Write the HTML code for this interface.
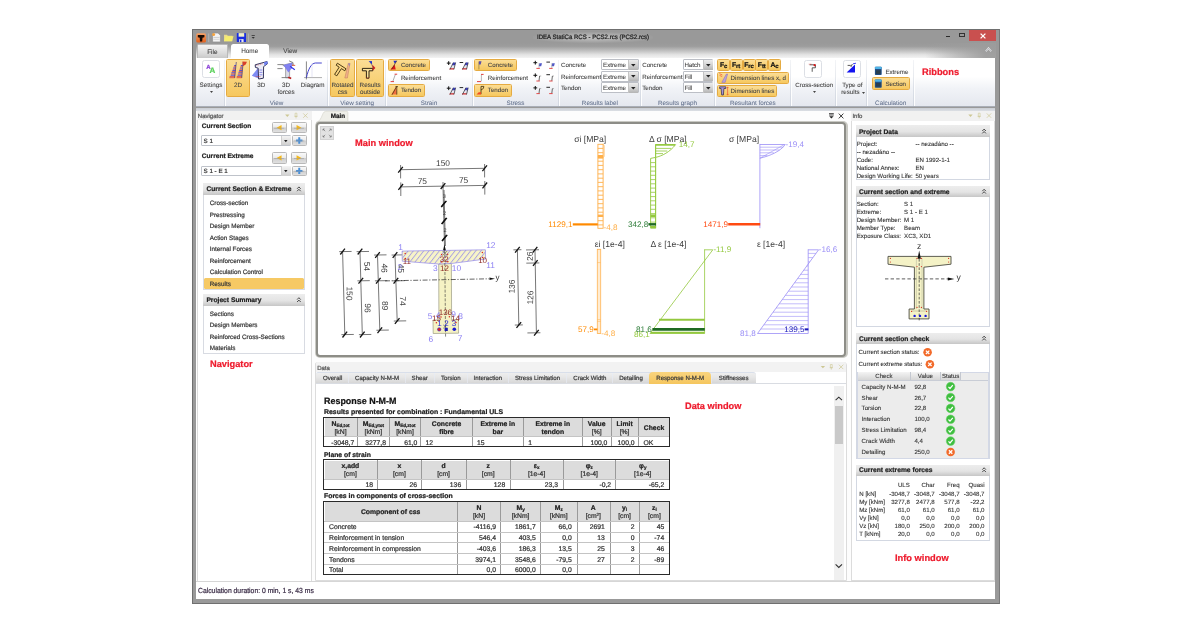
<!DOCTYPE html>
<html><head><meta charset="utf-8"><title>IDEA StatiCa RCS</title><style>
html,body{margin:0;padding:0;background:#fff;}
body{width:1200px;height:630px;position:relative;overflow:hidden;font-family:"Liberation Sans",Arial,sans-serif;color:#222;text-rendering:geometricPrecision;-webkit-text-stroke:0.22px;}
#r div{position:absolute;box-sizing:border-box;}
#r svg{position:absolute;overflow:visible;}
#r{position:absolute;left:0;top:0;width:1200px;height:630px;will-change:transform;}
.ob{background:linear-gradient(#fbdd95,#f6c85f);border:1px solid #e5ab42;border-radius:1.5px;}
.hd{background:linear-gradient(#ececec,#e2e2e2 55%,#c4c4c4);}
.gl{color:#5d6b86;}
</style></head><body><div id="r">
<div style="left:192.00px;top:29.00px;width:807.50px;height:574.50px;background:#999;border:1px solid #6f6f6f;border-right-color:#7a7a7a;"></div>
<div style="left:196.00px;top:43.00px;width:799.50px;height:15.00px;background:linear-gradient(#999 0%,#9d9d9d 22%,#bcbcbc 48%,#e3e3e3 78%,#f3f3f3 100%);"></div>
<div style="left:925.00px;top:43.00px;width:70.50px;height:14.50px;background:linear-gradient(90deg,rgba(156,156,156,0) 0%,rgba(156,156,156,.55) 45%,rgba(156,156,156,.95) 85%);"></div>
<div style="left:533.00px;top:31.50px;width:120.00px;height:11.00px;background:radial-gradient(ellipse at center,rgba(230,230,230,.55) 0%,rgba(200,200,200,.25) 55%,rgba(156,156,156,0) 75%);"></div>
<div id="f4" style="left:537.00px;top:32.00px;height:12.00px;line-height:12.00px;font-size:6.3px;white-space:nowrap;transform-origin:0 50%;transform:scaleX(0.9611);color:#1c1c1c;">IDEA StatiCa RCS - PCS2.rcs (PCS2.rcs)</div>
<div style="left:945.60px;top:36.20px;width:4.60px;height:1.30px;background:#2a2a2a;"></div>
<div style="left:959.30px;top:32.80px;width:5.60px;height:4.70px;border:0.8px solid #333;border-top-width:1.6px;"></div>
<div style="left:969.30px;top:29.60px;width:26.30px;height:11.20px;background:#c9504f;"></div>
<svg style="left:979.5px;top:32.5px" width="6" height="6" viewBox="0 0 6 6"><path d="M0.6 0.6L5.4 5.4M5.4 0.6L0.6 5.4" stroke="#fff" stroke-width="1.3" fill="none"/></svg>
<svg style="left:985.2px;top:47.3px" width="7" height="5" viewBox="0 0 7 5"><path d="M0.8 4.2L3.5 1.2L6.2 4.2" stroke="#f4f4f4" stroke-width="1.5" fill="none"/><path d="M0.8 4.2L3.5 1.2L6.2 4.2" stroke="#8a8f9a" stroke-width="0.6" fill="none"/></svg>
<svg style="left:196px;top:32.5px" width="56" height="10" viewBox="196 32.5 56 10">
<defs><linearGradient id="gA" x1="0" y1="0" x2="0" y2="1"><stop offset="0" stop-color="#f6a268"/><stop offset="1" stop-color="#e4601c"/></linearGradient></defs>
<rect x="196.2" y="32.8" width="9.8" height="9.3" rx="1.6" fill="url(#gA)"/>
<path d="M197.8 34.6h6.6v2.1l-1.9 0.6-0.3 3.8h-2.2l-0.3-3.8-1.9-0.6z" fill="#1a0d06"/>
<rect x="208.2" y="33" width="1" height="8.6" fill="#b4b4b4"/>
<path d="M212.6 32.6h5.4l2.4 2.2v6.6h-7.8z" fill="#f4f4f4" stroke="#8a8a8a" stroke-width="0.6"/>
<rect x="213.4" y="36.4" width="6.2" height="1" fill="#cfcfcf"/><rect x="213.4" y="38.3" width="6.2" height="1" fill="#d8d8d8"/>
<circle cx="213.6" cy="34" r="1.5" fill="#f6a23a"/>
<path d="M224 34.2h3l0.8 1h4.6v5.6h-8.4z" fill="#e9dc8a"/>
<path d="M224 40.8l1.6-5h8l-1.8 5z" fill="#f6ee6e"/>
<rect x="236.8" y="32.6" width="9.2" height="9" rx="0.6" fill="#1a2ee0"/>
<rect x="238.6" y="32.6" width="5.6" height="3.6" fill="#f2f0c6"/><rect x="239.2" y="38.6" width="4.4" height="3" fill="#e6e6ee"/><rect x="240" y="39.2" width="1.4" height="2.4" fill="#1a2ee0"/>
<rect x="248" y="33" width="1" height="8.6" fill="#b0b0b0"/><rect x="251.6" y="34.6" width="3.2" height="0.8" fill="#333"/><path d="M251.6 36.4h3.2l-1.6 1.8z" fill="#333"/>
</svg>
<div style="left:196.80px;top:44.40px;width:31.60px;height:13.20px;background:linear-gradient(#f3f3f3,#dcdcdc 60%,#c9c9c9);border:1px solid #b9b9b9;border-bottom:none;border-radius:1.5px 1.5px 0 0;"></div>
<div style="left:112.30px;width:200px;text-align:center;top:47.00px;height:12.00px;line-height:12.00px;font-size:6.4px;white-space:nowrap;color:#333;-webkit-text-stroke:0.06px;">File</div>
<div style="left:230.60px;top:44.00px;width:38.40px;height:14.00px;background:#fff;border-radius:2.5px 2.5px 0 0;"></div>
<div style="left:149.70px;width:200px;text-align:center;top:46.00px;height:12.00px;line-height:12.00px;font-size:6.4px;white-space:nowrap;color:#3c3c3c;-webkit-text-stroke:0.06px;">Home</div>
<div style="left:190.20px;width:200px;text-align:center;top:46.00px;height:12.00px;line-height:12.00px;font-size:6.4px;white-space:nowrap;color:#3c3c3c;-webkit-text-stroke:0.06px;">View</div>
<div style="left:196.00px;top:57.50px;width:799.30px;height:49.20px;background:linear-gradient(#ffffff 0%,#ffffff 38%,#f1f3f7 62%,#e4e7ee 100%);"></div>
<div style="left:196.00px;top:106.20px;width:799.30px;height:1.30px;background:#a9aeb7;"></div>
<div style="left:196.00px;top:107.50px;width:799.30px;height:3.30px;background:linear-gradient(#c9cdd4,#dcdfe4);"></div>
<div style="left:196.00px;top:110.80px;width:799.30px;height:471.00px;background:#fdfdfd;"></div>
<div style="left:223.90px;top:59.50px;width:1.00px;height:46.00px;background:linear-gradient(rgba(214,219,228,.3),#d3d8e1);"></div>
<div style="left:224.90px;top:59.50px;width:1.00px;height:46.00px;background:rgba(255,255,255,.9);"></div>
<div style="left:327.20px;top:59.50px;width:1.00px;height:46.00px;background:linear-gradient(rgba(214,219,228,.3),#d3d8e1);"></div>
<div style="left:328.20px;top:59.50px;width:1.00px;height:46.00px;background:rgba(255,255,255,.9);"></div>
<div style="left:385.00px;top:59.50px;width:1.00px;height:46.00px;background:linear-gradient(rgba(214,219,228,.3),#d3d8e1);"></div>
<div style="left:386.00px;top:59.50px;width:1.00px;height:46.00px;background:rgba(255,255,255,.9);"></div>
<div style="left:471.80px;top:59.50px;width:1.00px;height:46.00px;background:linear-gradient(rgba(214,219,228,.3),#d3d8e1);"></div>
<div style="left:472.80px;top:59.50px;width:1.00px;height:46.00px;background:rgba(255,255,255,.9);"></div>
<div style="left:557.70px;top:59.50px;width:1.00px;height:46.00px;background:linear-gradient(rgba(214,219,228,.3),#d3d8e1);"></div>
<div style="left:558.70px;top:59.50px;width:1.00px;height:46.00px;background:rgba(255,255,255,.9);"></div>
<div style="left:639.60px;top:59.50px;width:1.00px;height:46.00px;background:linear-gradient(rgba(214,219,228,.3),#d3d8e1);"></div>
<div style="left:640.60px;top:59.50px;width:1.00px;height:46.00px;background:rgba(255,255,255,.9);"></div>
<div style="left:714.20px;top:59.50px;width:1.00px;height:46.00px;background:linear-gradient(rgba(214,219,228,.3),#d3d8e1);"></div>
<div style="left:715.20px;top:59.50px;width:1.00px;height:46.00px;background:rgba(255,255,255,.9);"></div>
<div style="left:790.10px;top:59.50px;width:1.00px;height:46.00px;background:linear-gradient(rgba(214,219,228,.3),#d3d8e1);"></div>
<div style="left:791.10px;top:59.50px;width:1.00px;height:46.00px;background:rgba(255,255,255,.9);"></div>
<div style="left:835.10px;top:59.50px;width:1.00px;height:46.00px;background:linear-gradient(rgba(214,219,228,.3),#d3d8e1);"></div>
<div style="left:836.10px;top:59.50px;width:1.00px;height:46.00px;background:rgba(255,255,255,.9);"></div>
<div style="left:866.20px;top:59.50px;width:1.00px;height:46.00px;background:linear-gradient(rgba(214,219,228,.3),#d3d8e1);"></div>
<div style="left:867.20px;top:59.50px;width:1.00px;height:46.00px;background:rgba(255,255,255,.9);"></div>
<div style="left:912.70px;top:59.50px;width:1.00px;height:46.00px;background:linear-gradient(rgba(214,219,228,.3),#d3d8e1);"></div>
<div style="left:913.70px;top:59.50px;width:1.00px;height:46.00px;background:rgba(255,255,255,.9);"></div>
<div style="left:176.50px;width:200px;text-align:center;top:98.00px;height:12.00px;line-height:12.00px;font-size:6.3px;white-space:nowrap;color:#62708c;-webkit-text-stroke:0.05px;">View</div>
<div style="left:257.20px;width:200px;text-align:center;top:98.00px;height:12.00px;line-height:12.00px;font-size:6.3px;white-space:nowrap;color:#62708c;-webkit-text-stroke:0.05px;">View setting</div>
<div style="left:329.00px;width:200px;text-align:center;top:98.00px;height:12.00px;line-height:12.00px;font-size:6.3px;white-space:nowrap;color:#62708c;-webkit-text-stroke:0.05px;">Strain</div>
<div style="left:415.40px;width:200px;text-align:center;top:98.00px;height:12.00px;line-height:12.00px;font-size:6.3px;white-space:nowrap;color:#62708c;-webkit-text-stroke:0.05px;">Stress</div>
<div style="left:499.90px;width:200px;text-align:center;top:98.00px;height:12.00px;line-height:12.00px;font-size:6.3px;white-space:nowrap;color:#62708c;-webkit-text-stroke:0.05px;">Results label</div>
<div style="left:577.50px;width:200px;text-align:center;top:98.00px;height:12.00px;line-height:12.00px;font-size:6.3px;white-space:nowrap;color:#62708c;-webkit-text-stroke:0.05px;">Results graph</div>
<div style="left:652.80px;width:200px;text-align:center;top:98.00px;height:12.00px;line-height:12.00px;font-size:6.3px;white-space:nowrap;color:#62708c;-webkit-text-stroke:0.05px;">Resultant forces</div>
<div style="left:790.70px;width:200px;text-align:center;top:98.00px;height:12.00px;line-height:12.00px;font-size:6.3px;white-space:nowrap;color:#62708c;-webkit-text-stroke:0.05px;">Calculation</div>
<div style="left:201.50px;top:60.00px;width:18.60px;height:18.00px;background:#fff;border:1px solid #dcdfe5;border-radius:2.5px;"></div>
<div style="left:206.20px;top:62.00px;height:12.00px;line-height:12.00px;font-size:6px;white-space:nowrap;color:#8a3fd8;font-weight:bold;">A</div>
<div style="left:209.60px;top:63.00px;height:16.00px;line-height:16.00px;font-size:8px;white-space:nowrap;color:#58d058;font-weight:bold;">A</div>
<div style="left:111.00px;width:200px;text-align:center;top:80.00px;height:12.00px;line-height:12.00px;font-size:6.3px;white-space:nowrap;color:#444;-webkit-text-stroke:0.08px;">Settings</div>
<svg style="left:209.5px;top:91.4px" width="3" height="2" viewBox="0 0 3 2"><path d="M0 0h3l-1.5 2z" fill="#444"/></svg>
<div class="ob" style="left:226.30px;top:59.00px;width:23.50px;height:38.00px;"></div>
<div style="left:138.00px;width:200px;text-align:center;top:80.00px;height:12.00px;line-height:12.00px;font-size:6.3px;white-space:nowrap;color:#444;-webkit-text-stroke:0.08px;">2D</div>
<div style="left:161.40px;width:200px;text-align:center;top:80.00px;height:12.00px;line-height:12.00px;font-size:6.3px;white-space:nowrap;color:#444;-webkit-text-stroke:0.08px;">3D</div>
<div style="left:186.00px;width:200px;text-align:center;top:80.00px;height:12.00px;line-height:12.00px;font-size:6.3px;white-space:nowrap;color:#444;-webkit-text-stroke:0.08px;">3D</div>
<div style="left:186.00px;width:200px;text-align:center;top:87.00px;height:12.00px;line-height:12.00px;font-size:6.3px;white-space:nowrap;color:#444;-webkit-text-stroke:0.08px;">forces</div>
<div style="left:212.60px;width:200px;text-align:center;top:80.00px;height:12.00px;line-height:12.00px;font-size:6.3px;white-space:nowrap;color:#444;-webkit-text-stroke:0.08px;">Diagram</div>
<div class="ob" style="left:329.90px;top:59.00px;width:25.60px;height:38.00px;"></div>
<div class="ob" style="left:356.10px;top:59.00px;width:27.90px;height:38.00px;"></div>
<div style="left:242.60px;width:200px;text-align:center;top:80.00px;height:12.00px;line-height:12.00px;font-size:6.3px;white-space:nowrap;color:#444;-webkit-text-stroke:0.08px;">Rotated</div>
<div style="left:242.60px;width:200px;text-align:center;top:87.00px;height:12.00px;line-height:12.00px;font-size:6.3px;white-space:nowrap;color:#444;-webkit-text-stroke:0.08px;">css</div>
<div style="left:270.10px;width:200px;text-align:center;top:80.00px;height:12.00px;line-height:12.00px;font-size:6.3px;white-space:nowrap;color:#444;-webkit-text-stroke:0.08px;">Results</div>
<div style="left:270.10px;width:200px;text-align:center;top:87.00px;height:12.00px;line-height:12.00px;font-size:6.3px;white-space:nowrap;color:#444;-webkit-text-stroke:0.08px;">outside</div>
<svg style="left:0;top:0" width="1200" height="630" viewBox="0 0 1200 630">
<!-- 2D icon -->
<g>
<path d="M235.6 62h0.9L234.7 78h-5.5z" fill="#f2dcae"/>
<path d="M242.2 62h1.2L241.8 78h-5.2z" fill="#f2dcae"/>
<g stroke="#3434d4" stroke-width="0.9"><path d="M234.2 65.6h1.8M233.2 68h2.6M232.4 70.4h3.2M231.4 72.8h3.9M230.6 75.2h4.5"/><path d="M240.8 65.6h2M240 68h2.6M239.2 70.4h3.2M238.4 72.8h3.8M237.6 75.2h4.4"/></g>
<g stroke="#d83a28" stroke-width="0.8"><path d="M233.7 66.8h2.2M232.8 69.2h2.9M231.9 71.6h3.5M231 74h4.2M229.6 76.6h5.3M229.3 77.7h5.4"/><path d="M240.4 66.8h2.3M239.6 69.2h2.9M238.8 71.6h3.5M238 74h4.1M236.8 76.6h5.2M236.6 77.7h5.2"/></g>
<path d="M236.3 62L234.6 78M243.2 62L241.7 78" stroke="#4a3a6a" stroke-width="0.7"/>
<path d="M242.4 61.6l4.5 0.2-1.2 2.8-2.8 1.6z" fill="#d8402a"/>
</g>
<!-- 3D icon -->
<g>
<path d="M251.8 75.8l6.4-8 0.4 10.8z" fill="#6878f2" opacity=".85"/>
<path d="M255.2 64.8l11.6-3.2 0.6 2.2-3.8 2.8-0.2 11.6-4.8 0.8-0.4-10.8-2.8-0.8z" fill="#ececf6" stroke="#24244e" stroke-width="0.9"/>
<path d="M263.8 62.6l4-1.4-0.2 2.6-3 1.6z" fill="#6f7ff0"/>
<path d="M256.4 65.4l6.4-1.6" stroke="#d04040" stroke-width="0.5" stroke-dasharray="1 0.8"/>
<path d="M259.4 70h3M259.4 72.4h3M259.4 74.8h3" stroke="#4a4ae0" stroke-width="0.6"/>
<path d="M255.6 76.6h5" stroke="#d04040" stroke-width="0.5"/>
</g>
<!-- 3D forces icon -->
<g>
<path d="M277.4 64.6h6.2M277.4 68.6h5.2M289 60.8l4 1.8v3" stroke="#555" stroke-width="0.7" fill="none"/>
<path d="M282.8 65.2l9.6-2.4 0.6 2.4-3.4 1.6v11h-4V67z" fill="#dcdce6" stroke="#777" stroke-width="0.6"/>
<path d="M283.4 65l8.8-2.2 -0.4 5.4-3.4 4.2z" fill="#7878f2" opacity=".9"/>
<path d="M290.2 66.4l4.6 3.4" stroke="#2828e8" stroke-width="1.1"/>
<path d="M292 65.2l3.2 0.2" stroke="#e04a28" stroke-width="0.9"/>
<path d="M281.6 77.6h9" stroke="#777" stroke-width="0.9"/>
<path d="M288.2 77.2l3 1.2" stroke="#c02020" stroke-width="1.6"/>
</g>
<!-- Diagram icon -->
<g fill="none">
<path d="M304 77.6h18" stroke="#9a9a9a" stroke-width="0.8"/><path d="M306.4 61.4v18" stroke="#555" stroke-width="0.7"/>
<path d="M306.4 77.6c2-9 5-14.4 9-14.6h6.4" stroke="#3030c8" stroke-width="0.9"/>
<path d="M312 63.4v14" stroke="#c8c8e8" stroke-width="0.5"/>
</g>
<!-- Rotated css icon -->
<g fill="none">
<path d="M337.4 63.2l8.6 5.6-1.2 2-3.4-2.2-4.6 7.2-2.2-1.4 4.6-7.2-3-2z" stroke="#3a2a08" stroke-width="0.9" fill="#f9d684"/>
<path d="M348.2 63.4l-3.4 14.6h2.6l2.6-14.6z" fill="#f0b088" stroke="#b06a50" stroke-width="0.4"/>
<path d="M347.8 63.4l2.4 0-0.6 3.2z" fill="#9a8ab8"/>
</g>
<!-- Results outside icon -->
<g>
<path d="M362.4 68.4h10.4v2.4h-3.8v7.4h-2.6v-7.4h-4z" fill="#fbe19a" stroke="#1a1206" stroke-width="0.9"/>
<path d="M368.6 61.2l3.2-0.2 0.4 3.6z" fill="#1a30d8"/>
<path d="M372.2 64.6l3.2 3.4-2.6 2.4z" fill="#e01818"/>
<path d="M370.4 62.6l3.6 6.4" stroke="#555" stroke-width="0.5"/>
<path d="M366.8 77.4v1M368.4 77.4v1" stroke="#d03020" stroke-width="0.6"/>
</g>
</svg>
<div class="ob" style="left:387.70px;top:59.30px;width:42.70px;height:12.20px;"></div>
<div class="ob" style="left:387.70px;top:84.30px;width:37.20px;height:12.30px;"></div>
<div style="left:400.90px;top:60.00px;height:12.00px;line-height:12.00px;font-size:6.2px;white-space:nowrap;color:#444;-webkit-text-stroke:0.08px;">Concrete</div>
<div style="left:400.90px;top:73.00px;height:12.00px;line-height:12.00px;font-size:6.2px;white-space:nowrap;color:#444;-webkit-text-stroke:0.08px;">Reinforcement</div>
<div style="left:400.90px;top:85.00px;height:12.00px;line-height:12.00px;font-size:6.2px;white-space:nowrap;color:#444;-webkit-text-stroke:0.08px;">Tendon</div>
<div class="ob" style="left:474.10px;top:59.30px;width:43.00px;height:12.20px;"></div>
<div class="ob" style="left:474.10px;top:84.30px;width:37.60px;height:12.30px;"></div>
<div style="left:487.80px;top:60.00px;height:12.00px;line-height:12.00px;font-size:6.2px;white-space:nowrap;color:#444;-webkit-text-stroke:0.08px;">Concrete</div>
<div style="left:487.80px;top:73.00px;height:12.00px;line-height:12.00px;font-size:6.2px;white-space:nowrap;color:#444;-webkit-text-stroke:0.08px;">Reinforcement</div>
<div style="left:487.80px;top:85.00px;height:12.00px;line-height:12.00px;font-size:6.2px;white-space:nowrap;color:#444;-webkit-text-stroke:0.08px;">Tendon</div>
<div style="left:561.00px;top:60.00px;height:12.00px;line-height:12.00px;font-size:6.2px;white-space:nowrap;color:#444;-webkit-text-stroke:0.08px;">Concrete</div>
<div style="left:601.40px;top:59.30px;width:37.20px;height:10.90px;background:#fff;border:1px solid #bcbfc6;border-radius:1px;"></div>
<div style="left:628.20px;top:60.00px;width:9.70px;height:9.50px;background:linear-gradient(#ececec,#d6d6d6 45%,#b4b4b4);border-left:1px solid #c4c4c4;"></div>
<svg style="left:630.90px;top:63.55px" width="4.6" height="2.6" viewBox="0 0 4.6 2.6"><path d="M0 0h4.6l-2.3 2.6z" fill="#222"/></svg>
<div style="left:603.00px;top:60.00px;height:12.00px;line-height:12.00px;font-size:6.2px;white-space:nowrap;color:#444;-webkit-text-stroke:0.08px;">Extreme</div>
<div style="left:642.20px;top:60.00px;height:12.00px;line-height:12.00px;font-size:6.2px;white-space:nowrap;color:#444;-webkit-text-stroke:0.08px;">Concrete</div>
<div style="left:683.00px;top:59.30px;width:30.20px;height:10.90px;background:#fff;border:1px solid #bcbfc6;border-radius:1px;"></div>
<div style="left:703.00px;top:60.00px;width:9.50px;height:9.50px;background:linear-gradient(#ececec,#d6d6d6 45%,#b4b4b4);border-left:1px solid #c4c4c4;"></div>
<svg style="left:705.60px;top:63.55px" width="4.6" height="2.6" viewBox="0 0 4.6 2.6"><path d="M0 0h4.6l-2.3 2.6z" fill="#222"/></svg>
<div style="left:684.40px;top:60.00px;height:12.00px;line-height:12.00px;font-size:6.2px;white-space:nowrap;color:#444;-webkit-text-stroke:0.08px;">Hatch</div>
<div style="left:561.00px;top:72.00px;height:12.00px;line-height:12.00px;font-size:6.2px;white-space:nowrap;color:#444;-webkit-text-stroke:0.08px;">Reinforcement</div>
<div style="left:601.40px;top:71.00px;width:37.20px;height:10.60px;background:#fff;border:1px solid #bcbfc6;border-radius:1px;"></div>
<div style="left:628.20px;top:71.70px;width:9.70px;height:9.20px;background:linear-gradient(#ececec,#d6d6d6 45%,#b4b4b4);border-left:1px solid #c4c4c4;"></div>
<svg style="left:630.90px;top:75.10px" width="4.6" height="2.6" viewBox="0 0 4.6 2.6"><path d="M0 0h4.6l-2.3 2.6z" fill="#222"/></svg>
<div style="left:603.00px;top:72.00px;height:12.00px;line-height:12.00px;font-size:6.2px;white-space:nowrap;color:#444;-webkit-text-stroke:0.08px;">Extreme</div>
<div style="left:642.20px;top:72.00px;height:12.00px;line-height:12.00px;font-size:6.2px;white-space:nowrap;color:#444;-webkit-text-stroke:0.08px;">Reinforcement</div>
<div style="left:683.00px;top:71.00px;width:30.20px;height:10.60px;background:#fff;border:1px solid #bcbfc6;border-radius:1px;"></div>
<div style="left:703.00px;top:71.70px;width:9.50px;height:9.20px;background:linear-gradient(#ececec,#d6d6d6 45%,#b4b4b4);border-left:1px solid #c4c4c4;"></div>
<svg style="left:705.60px;top:75.10px" width="4.6" height="2.6" viewBox="0 0 4.6 2.6"><path d="M0 0h4.6l-2.3 2.6z" fill="#222"/></svg>
<div style="left:684.40px;top:72.00px;height:12.00px;line-height:12.00px;font-size:6.2px;white-space:nowrap;color:#444;-webkit-text-stroke:0.08px;">Fill</div>
<div style="left:561.00px;top:83.00px;height:12.00px;line-height:12.00px;font-size:6.2px;white-space:nowrap;color:#444;-webkit-text-stroke:0.08px;">Tendon</div>
<div style="left:601.40px;top:82.40px;width:37.20px;height:10.90px;background:#fff;border:1px solid #bcbfc6;border-radius:1px;"></div>
<div style="left:628.20px;top:83.10px;width:9.70px;height:9.50px;background:linear-gradient(#ececec,#d6d6d6 45%,#b4b4b4);border-left:1px solid #c4c4c4;"></div>
<svg style="left:630.90px;top:86.65px" width="4.6" height="2.6" viewBox="0 0 4.6 2.6"><path d="M0 0h4.6l-2.3 2.6z" fill="#222"/></svg>
<div style="left:603.00px;top:83.00px;height:12.00px;line-height:12.00px;font-size:6.2px;white-space:nowrap;color:#444;-webkit-text-stroke:0.08px;">Extreme</div>
<div style="left:642.20px;top:83.00px;height:12.00px;line-height:12.00px;font-size:6.2px;white-space:nowrap;color:#444;-webkit-text-stroke:0.08px;">Tendon</div>
<div style="left:683.00px;top:82.40px;width:30.20px;height:10.90px;background:#fff;border:1px solid #bcbfc6;border-radius:1px;"></div>
<div style="left:703.00px;top:83.10px;width:9.50px;height:9.50px;background:linear-gradient(#ececec,#d6d6d6 45%,#b4b4b4);border-left:1px solid #c4c4c4;"></div>
<svg style="left:705.60px;top:86.65px" width="4.6" height="2.6" viewBox="0 0 4.6 2.6"><path d="M0 0h4.6l-2.3 2.6z" fill="#222"/></svg>
<div style="left:684.40px;top:83.00px;height:12.00px;line-height:12.00px;font-size:6.2px;white-space:nowrap;color:#444;-webkit-text-stroke:0.08px;">Fill</div>
<div class="ob" style="left:717.40px;top:59.30px;width:12.50px;height:11.60px;"></div>
<div style="left:623.50px;width:200px;text-align:center;top:60.00px;height:12.00px;line-height:12.00px;font-size:6.8px;white-space:nowrap;color:#111;font-weight:bold;letter-spacing:-0.15px;"><span style="font-size:6.8px">F</span><span style="font-size:5.9px;position:relative;top:1.1px">c</span></div>
<div class="ob" style="left:729.60px;top:59.30px;width:13.20px;height:11.60px;"></div>
<div style="left:636.05px;width:200px;text-align:center;top:60.00px;height:12.00px;line-height:12.00px;font-size:6.8px;white-space:nowrap;color:#111;font-weight:bold;letter-spacing:-0.15px;"><span style="font-size:6.8px">F</span><span style="font-size:5.9px;position:relative;top:1.1px">rt</span></div>
<div class="ob" style="left:742.50px;top:59.30px;width:13.20px;height:11.60px;"></div>
<div style="left:648.95px;width:200px;text-align:center;top:60.00px;height:12.00px;line-height:12.00px;font-size:6.8px;white-space:nowrap;color:#111;font-weight:bold;letter-spacing:-0.15px;"><span style="font-size:6.8px">F</span><span style="font-size:5.9px;position:relative;top:1.1px">rc</span></div>
<div class="ob" style="left:755.40px;top:59.30px;width:12.90px;height:11.60px;"></div>
<div style="left:661.70px;width:200px;text-align:center;top:60.00px;height:12.00px;line-height:12.00px;font-size:6.8px;white-space:nowrap;color:#111;font-weight:bold;letter-spacing:-0.15px;"><span style="font-size:6.8px">F</span><span style="font-size:5.9px;position:relative;top:1.1px">tt</span></div>
<div class="ob" style="left:768.00px;top:59.30px;width:13.00px;height:11.60px;"></div>
<div style="left:674.35px;width:200px;text-align:center;top:60.00px;height:12.00px;line-height:12.00px;font-size:6.8px;white-space:nowrap;color:#111;font-weight:bold;letter-spacing:-0.15px;"><span style="font-size:6.8px">A</span><span style="font-size:5.9px;position:relative;top:1.1px">c</span></div>
<div class="ob" style="left:717.40px;top:71.70px;width:72.00px;height:12.00px;"></div>
<div class="ob" style="left:717.40px;top:84.80px;width:59.60px;height:12.00px;"></div>
<div style="left:730.60px;top:73.00px;height:12.00px;line-height:12.00px;font-size:6.2px;white-space:nowrap;color:#444;-webkit-text-stroke:0.08px;">Dimension lines x, d</div>
<div style="left:730.60px;top:86.00px;height:12.00px;line-height:12.00px;font-size:6.2px;white-space:nowrap;color:#444;-webkit-text-stroke:0.08px;">Dimension lines</div>
<div style="left:804.40px;top:60.30px;width:17.80px;height:17.60px;background:#fff;border:1px solid #dcdfe5;border-radius:2.5px;"></div>
<div style="left:714.20px;width:200px;text-align:center;top:80.00px;height:12.00px;line-height:12.00px;font-size:6.2px;white-space:nowrap;color:#444;-webkit-text-stroke:0.08px;">Cross-section</div>
<svg style="left:813px;top:91.4px" width="3" height="2" viewBox="0 0 3 2"><path d="M0 0h3l-1.5 2z" fill="#444"/></svg>
<div style="left:842.60px;top:60.30px;width:18.10px;height:17.60px;background:#fff;border:1px solid #dcdfe5;border-radius:2.5px;"></div>
<div style="left:752.30px;width:200px;text-align:center;top:80.00px;height:12.00px;line-height:12.00px;font-size:6.2px;white-space:nowrap;color:#444;-webkit-text-stroke:0.08px;">Type of</div>
<div style="left:750.40px;width:200px;text-align:center;top:87.00px;height:12.00px;line-height:12.00px;font-size:6.2px;white-space:nowrap;color:#444;-webkit-text-stroke:0.08px;">results</div>
<svg style="left:862.2px;top:91.6px" width="3" height="2" viewBox="0 0 3 2"><path d="M0 0h3l-1.5 2z" fill="#444"/></svg>
<div class="ob" style="left:871.90px;top:77.40px;width:38.20px;height:12.60px;"></div>
<div style="left:885.40px;top:67.00px;height:12.00px;line-height:12.00px;font-size:6.2px;white-space:nowrap;color:#444;-webkit-text-stroke:0.08px;">Extreme</div>
<div style="left:885.40px;top:79.00px;height:12.00px;line-height:12.00px;font-size:6.2px;white-space:nowrap;color:#444;-webkit-text-stroke:0.08px;">Section</div>
<div id="f132" style="left:922.10px;top:64.00px;height:16.00px;line-height:16.00px;font-size:9.4px;white-space:nowrap;transform-origin:0 50%;transform:scaleX(0.9893);color:#ee1c2e;font-weight:bold;">Ribbons</div>
<svg style="left:0;top:0" width="1200" height="630" viewBox="0 0 1200 630"><g transform="translate(446.8,61.2)"><path d="M0 1.9h3.8M1.9 0v3.8" stroke="#111" stroke-width="1"/><path d="M6.4 1.4h2.4L7.2 8.2H3z" fill="#e8e8f0"/><path d="M6.5 1.4h2.3l-0.7 2.6H5.3z" fill="#3a3ec0"/><path d="M3 7h4.4l-0.3 1.2H2.6z" fill="#d23030"/><path d="M6.5 1.4L3.1 8.2M8.8 1.4L7.1 8.2" stroke="#26262e" stroke-width="0.7"/></g><g transform="translate(459.4,61.2)"><path d="M0.2 1.3h3.6" stroke="#111" stroke-width="0.9"/><path d="M6.4 1.4h2.4L7.2 8.2H3z" fill="#e8e8f0"/><path d="M6.5 1.4h2.3l-0.7 2.6H5.3z" fill="#3a3ec0"/><path d="M3 7h4.4l-0.3 1.2H2.6z" fill="#d23030"/><path d="M6.5 1.4L3.1 8.2M8.8 1.4L7.1 8.2" stroke="#26262e" stroke-width="0.7"/></g><g transform="translate(446.8,86.3)"><path d="M0 1.9h3.8M1.9 0v3.8" stroke="#111" stroke-width="1"/><path d="M6.4 1.4h2.4L7.2 8.2H3z" fill="#e8e8f0"/><path d="M6.5 1.4h2.3l-0.7 2.6H5.3z" fill="#3a3ec0"/><path d="M3 7h4.4l-0.3 1.2H2.6z" fill="#d23030"/><path d="M6.5 1.4L3.1 8.2M8.8 1.4L7.1 8.2" stroke="#26262e" stroke-width="0.7"/></g><g transform="translate(459.4,86.3)"><path d="M0.2 1.3h3.6" stroke="#111" stroke-width="0.9"/><path d="M6.4 1.4h2.4L7.2 8.2H3z" fill="#e8e8f0"/><path d="M6.5 1.4h2.3l-0.7 2.6H5.3z" fill="#3a3ec0"/><path d="M3 7h4.4l-0.3 1.2H2.6z" fill="#d23030"/><path d="M6.5 1.4L3.1 8.2M8.8 1.4L7.1 8.2" stroke="#26262e" stroke-width="0.7"/></g><g transform="translate(533.4,60.8)"><path d="M0 1.9h3.8M1.9 0v3.8" stroke="#111" stroke-width="1"/><path d="M6 2.4h2.6l-0.8 3H5.4z" fill="#5058c8"/><path d="M5.6 2.4v5.2" stroke="#888" stroke-width="0.5"/><path d="M3 7.6h3.4" stroke="#e02020" stroke-width="0.8"/></g><g transform="translate(546.2,60.8)"><path d="M0.2 1.3h3.6" stroke="#111" stroke-width="0.9"/><path d="M6 2.4h2.6l-0.8 3H5.4z" fill="#5058c8"/><path d="M5.6 2.4v5.2" stroke="#888" stroke-width="0.5"/><path d="M3 7.6h3.4" stroke="#e02020" stroke-width="0.8"/></g><g transform="translate(533.4,73.4)"><path d="M0 1.9h3.8M1.9 0v3.8" stroke="#111" stroke-width="1"/><path d="M6 2.6h1.8" stroke="#888" stroke-width="0.6"/><path d="M6.2 2.6L5.6 7.4" stroke="#444" stroke-width="0.8"/><path d="M3 7.6h3.4" stroke="#e02020" stroke-width="0.8"/></g><g transform="translate(546.2,73.4)"><path d="M0.2 1.3h3.6" stroke="#111" stroke-width="0.9"/><path d="M6 2.6h1.8" stroke="#888" stroke-width="0.6"/><path d="M6.2 2.6L5.6 7.4" stroke="#444" stroke-width="0.8"/><path d="M3 7.6h3.4" stroke="#e02020" stroke-width="0.8"/></g><g transform="translate(533.4,86.0)"><path d="M0 1.9h3.8M1.9 0v3.8" stroke="#111" stroke-width="1"/><path d="M6 2.6h1.8" stroke="#888" stroke-width="0.6"/><path d="M6.2 2.6L5.6 7.4" stroke="#444" stroke-width="0.8"/><path d="M3 7.6h3.4" stroke="#e02020" stroke-width="0.8"/></g><g transform="translate(546.2,86.0)"><path d="M0.2 1.3h3.6" stroke="#111" stroke-width="0.9"/><path d="M6 2.6h1.8" stroke="#888" stroke-width="0.6"/><path d="M6.2 2.6L5.6 7.4" stroke="#444" stroke-width="0.8"/><path d="M3 7.6h3.4" stroke="#e02020" stroke-width="0.8"/></g><g><path d="M393.4 60.8h3.6l-2.2 3z" fill="#2030d0"/><path d="M394.7 64.4l-4.3 5h5.3z" fill="#e01818"/><path d="M396.8 60.8l-5.2 8.6" stroke="#3a2a18" stroke-width="0.6"/></g>
<g><path d="M395.4 74.4l-2.6 7" stroke="#999" stroke-width="0.8"/><path d="M394.6 74.2h2.6" stroke="#e04040" stroke-width="1"/><path d="M390.6 81.6h3.4" stroke="#e04040" stroke-width="1"/></g>
<g><path d="M396.4 86.6l-5 8h5.4z" fill="#f07040"/><path d="M396.6 86.4l-4.6 8.4M396.8 86.6v8M395.4 86.6h2.6" stroke="#3a2a08" stroke-width="0.7" fill="none"/></g>
<g><path d="M478.9 61.6v7.8" stroke="#8a7a40" stroke-width="0.7"/><path d="M478.9 61.2h2.6l-0.8 3.2h-1.8z" fill="#5c50a8"/></g>
<g><path d="M481.4 74.6v6.8" stroke="#999" stroke-width="0.7"/><path d="M481 74.4h2.6" stroke="#e04040" stroke-width="1"/><path d="M477 81.6h4" stroke="#e04040" stroke-width="1"/></g>
<g><path d="M481 94.2V86.4h2.8l-0.4 2-2.4 1.6" stroke="#3a2a08" stroke-width="0.8" fill="none"/><path d="M476.6 94.6h4.4v-2.6l-2.6 0.4z" fill="#f04a22"/></g>
<g><path d="M726.4 74l-4.6 8.4h3.4l2.4-8.4z" fill="#b8a0d8" stroke="#8a6ab8" stroke-width="0.5"/><path d="M719.4 73.6l3 1.4M719.6 75.4l2.6 1.2" stroke="#f05028" stroke-width="0.7"/></g>
<g><path d="M719.6 86.8h6.2v1.7h-1.9l-0.5 6.5h-1.7l-0.6-6.5h-1.5z" fill="#a794d8" stroke="#2c2648" stroke-width="0.7"/><path d="M727.6 87v8" stroke="#f04028" stroke-width="0.6"/><path d="M726.8 88l0.8-1.2 0.8 1.2M726.8 94l0.8 1.2 0.8-1.2" stroke="#f04028" stroke-width="0.5" fill="none"/></g>
<g><path d="M809.6 64.8h5.8v3h-3.2v4" stroke="#333" stroke-width="0.8" fill="none"/><path d="M808.8 64.2h3" stroke="#e02020" stroke-width="0.6" stroke-dasharray="0.8 0.5"/><circle cx="814.6" cy="65.2" r="1.1" fill="#e01818"/></g>
<g><path d="M855 64.6v7.8h-8.4z" fill="#1414f0"/><path d="M847.6 65.4h3.2M852.4 64l-1.6 3" stroke="#111" stroke-width="0.7"/><path d="M853 63.8l3-0.6" stroke="#1414f0" stroke-width="0.8"/></g>
<g><rect x="874.9" y="66.7" width="6.8" height="8.4" rx="0.8" fill="#1f4e86"/><rect x="874.9" y="66.7" width="6.8" height="2.4" rx="0.8" fill="#4fb4e8"/><rect x="875.9" y="70.3" width="4.8" height="3.6" fill="#2a3e4e"/></g><g><rect x="874.9" y="79.4" width="6.8" height="8.4" rx="0.8" fill="#1f4e86"/><rect x="874.9" y="79.4" width="6.8" height="2.4" rx="0.8" fill="#4fb4e8"/><rect x="875.9" y="83.0" width="4.8" height="3.6" fill="#2a3e4e"/></g></svg>
<div style="left:196.60px;top:110.80px;width:115.40px;height:471.00px;background:#fff;border:1px solid #dcdcdc;border-top:none;border-bottom:none;"></div>
<div style="left:196.60px;top:110.80px;width:115.40px;height:9.60px;background:#f1f1f1;"></div>
<div style="left:197.80px;top:111.00px;height:12.00px;line-height:12.00px;font-size:6.0px;white-space:nowrap;color:#555;">Navigator</div>
<svg style="left:0;top:0" width="1200" height="630" viewBox="0 0 1200 630"><path d="M285.1 114.6h4.4l-2.2 2.4z" fill="#cdc794"/><path d="M295.1 113.19999999999999h1.8v3.2h-1.8zM294.4 116.39999999999999h3.2M296 116.39999999999999v2" stroke="#cdc794" stroke-width="0.6" fill="none"/><path d="M303.2 113.39999999999999l4.4 4.4M307.59999999999997 113.39999999999999l-4.4 4.4" stroke="#cdc794" stroke-width="0.7" fill="none"/></svg>
<div style="left:201.80px;top:121.00px;height:12.00px;line-height:12.00px;font-size:6.6px;white-space:nowrap;color:#222;font-weight:bold;">Current Section</div>
<div style="left:201.80px;top:151.00px;height:12.00px;line-height:12.00px;font-size:6.6px;white-space:nowrap;color:#222;font-weight:bold;">Current Extreme</div>
<div style="left:271.50px;top:121.90px;width:15.30px;height:11.50px;background:linear-gradient(#fafafa 0%,#ececec 45%,#cfcfcf 55%,#e0e0e0 100%);border:1px solid #b9b9b9;border-radius:1.5px;"></div>
<svg style="left:0;top:0" width="1200" height="630" viewBox="0 0 1200 630"><path d="M281.54999999999995 125.05000000000001v5.2l-5-2.6z" fill="#f4b81a"/><path d="M274.15 128.25h10" stroke="#9a9a9a" stroke-width="0.6"/></svg>
<div style="left:291.20px;top:121.90px;width:15.50px;height:11.50px;background:linear-gradient(#fafafa 0%,#ececec 45%,#cfcfcf 55%,#e0e0e0 100%);border:1px solid #b9b9b9;border-radius:1.5px;"></div>
<svg style="left:0;top:0" width="1200" height="630" viewBox="0 0 1200 630"><path d="M296.55 125.05000000000001v5.2l5-2.6z" fill="#f4b81a"/><path d="M293.95 128.25h10" stroke="#9a9a9a" stroke-width="0.6"/></svg>
<div style="left:271.50px;top:152.20px;width:15.30px;height:11.50px;background:linear-gradient(#fafafa 0%,#ececec 45%,#cfcfcf 55%,#e0e0e0 100%);border:1px solid #b9b9b9;border-radius:1.5px;"></div>
<svg style="left:0;top:0" width="1200" height="630" viewBox="0 0 1200 630"><path d="M281.54999999999995 155.35v5.2l-5-2.6z" fill="#f4b81a"/><path d="M274.15 158.54999999999998h10" stroke="#9a9a9a" stroke-width="0.6"/></svg>
<div style="left:291.20px;top:152.20px;width:15.50px;height:11.50px;background:linear-gradient(#fafafa 0%,#ececec 45%,#cfcfcf 55%,#e0e0e0 100%);border:1px solid #b9b9b9;border-radius:1.5px;"></div>
<svg style="left:0;top:0" width="1200" height="630" viewBox="0 0 1200 630"><path d="M296.55 155.35v5.2l5-2.6z" fill="#f4b81a"/><path d="M293.95 158.54999999999998h10" stroke="#9a9a9a" stroke-width="0.6"/></svg>
<div style="left:201.40px;top:135.20px;width:90.00px;height:10.60px;background:#fff;border:1px solid #bfc3ca;border-radius:1px;"></div>
<div style="left:281.30px;top:135.80px;width:9.60px;height:9.40px;background:linear-gradient(#f4f4f4,#cfcfcf);border-left:1px solid #cfcfcf;"></div>
<svg style="left:284.3px;top:139.5px" width="3.6" height="2.2" viewBox="0 0 3.6 2.2"><path d="M0 0h3.6l-1.8 2.2z" fill="#222"/></svg>
<div style="left:291.80px;top:135.20px;width:14.90px;height:10.60px;background:linear-gradient(#fafafa 0%,#ececec 45%,#cfcfcf 55%,#e0e0e0 100%);border:1px solid #b9b9b9;border-radius:1.5px;"></div>
<svg style="left:0;top:0" width="1200" height="630" viewBox="0 0 1200 630"><path d="M296.05 140.5h6.4M299.25 137.3v6.4" stroke="#4a90d8" stroke-width="2"/><path d="M294.25 140.9h10" stroke="#9a9a9a" stroke-width="0.5"/></svg>
<div style="left:203.60px;top:136.00px;height:12.00px;line-height:12.00px;font-size:6.2px;white-space:nowrap;color:#333;">S 1</div>
<div style="left:201.40px;top:165.60px;width:90.00px;height:10.60px;background:#fff;border:1px solid #bfc3ca;border-radius:1px;"></div>
<div style="left:281.30px;top:166.20px;width:9.60px;height:9.40px;background:linear-gradient(#f4f4f4,#cfcfcf);border-left:1px solid #cfcfcf;"></div>
<svg style="left:284.3px;top:169.9px" width="3.6" height="2.2" viewBox="0 0 3.6 2.2"><path d="M0 0h3.6l-1.8 2.2z" fill="#222"/></svg>
<div style="left:291.80px;top:165.60px;width:14.90px;height:10.60px;background:linear-gradient(#fafafa 0%,#ececec 45%,#cfcfcf 55%,#e0e0e0 100%);border:1px solid #b9b9b9;border-radius:1.5px;"></div>
<svg style="left:0;top:0" width="1200" height="630" viewBox="0 0 1200 630"><path d="M296.05 170.9h6.4M299.25 167.70000000000002v6.4" stroke="#4a90d8" stroke-width="2"/><path d="M294.25 171.3h10" stroke="#9a9a9a" stroke-width="0.5"/></svg>
<div style="left:203.60px;top:166.00px;height:12.00px;line-height:12.00px;font-size:6.2px;white-space:nowrap;color:#333;">S 1 - E 1</div>
<div style="left:203.30px;top:183.40px;width:101.60px;height:11.60px;background:linear-gradient(#ededed 0%,#e4e4e4 55%,#c6c6c6 100%);"></div>
<div style="left:206.40px;top:184.00px;height:12.00px;line-height:12.00px;font-size:6.7px;white-space:nowrap;color:#1c1c1c;font-weight:bold;">Current Section &amp; Extreme</div>
<svg style="left:0;top:0" width="1200" height="630" viewBox="0 0 1200 630"><path d="M297.09999999999997 188.8l1.8-1.9 1.8 1.9M297.09999999999997 191.20000000000002l1.8-1.9 1.8 1.9" stroke="#222" stroke-width="0.8" fill="none"/></svg>
<div style="left:203.30px;top:195.00px;width:101.60px;height:95.40px;background:#fff;border:1px solid #d8dbe2;border-top:none;"></div>
<div style="left:204.00px;top:278.30px;width:100.40px;height:11.20px;background:#f6c964;border-radius:1.5px;"></div>
<div style="left:209.80px;top:198.00px;height:12.00px;line-height:12.00px;font-size:6.3px;white-space:nowrap;color:#3a3a3a;">Cross-section</div>
<div style="left:209.80px;top:210.00px;height:12.00px;line-height:12.00px;font-size:6.3px;white-space:nowrap;color:#3a3a3a;">Prestressing</div>
<div style="left:209.80px;top:221.00px;height:12.00px;line-height:12.00px;font-size:6.3px;white-space:nowrap;color:#3a3a3a;">Design Member</div>
<div style="left:209.80px;top:233.00px;height:12.00px;line-height:12.00px;font-size:6.3px;white-space:nowrap;color:#3a3a3a;">Action Stages</div>
<div style="left:209.80px;top:244.00px;height:12.00px;line-height:12.00px;font-size:6.3px;white-space:nowrap;color:#3a3a3a;">Internal Forces</div>
<div style="left:209.80px;top:256.00px;height:12.00px;line-height:12.00px;font-size:6.3px;white-space:nowrap;color:#3a3a3a;">Reinforcement</div>
<div style="left:209.80px;top:267.00px;height:12.00px;line-height:12.00px;font-size:6.3px;white-space:nowrap;color:#3a3a3a;">Calculation Control</div>
<div style="left:209.80px;top:279.00px;height:12.00px;line-height:12.00px;font-size:6.3px;white-space:nowrap;color:#3a3a3a;">Results</div>
<div style="left:203.30px;top:294.00px;width:101.60px;height:12.00px;background:linear-gradient(#ededed 0%,#e4e4e4 55%,#c6c6c6 100%);"></div>
<div style="left:206.40px;top:295.00px;height:12.00px;line-height:12.00px;font-size:6.7px;white-space:nowrap;color:#1c1c1c;font-weight:bold;">Project Summary</div>
<svg style="left:0;top:0" width="1200" height="630" viewBox="0 0 1200 630"><path d="M297.09999999999997 299.6l1.8-1.9 1.8 1.9M297.09999999999997 302.0l1.8-1.9 1.8 1.9" stroke="#222" stroke-width="0.8" fill="none"/></svg>
<div style="left:203.30px;top:306.00px;width:101.60px;height:48.40px;background:#fff;border:1px solid #d8dbe2;border-top:none;"></div>
<div style="left:209.80px;top:309.00px;height:12.00px;line-height:12.00px;font-size:6.3px;white-space:nowrap;color:#3a3a3a;">Sections</div>
<div style="left:209.80px;top:320.00px;height:12.00px;line-height:12.00px;font-size:6.3px;white-space:nowrap;color:#3a3a3a;">Design Members</div>
<div style="left:209.80px;top:332.00px;height:12.00px;line-height:12.00px;font-size:6.3px;white-space:nowrap;color:#3a3a3a;">Reinforced Cross-Sections</div>
<div style="left:209.80px;top:343.00px;height:12.00px;line-height:12.00px;font-size:6.3px;white-space:nowrap;color:#3a3a3a;">Materials</div>
<div id="f181" style="left:210.10px;top:356.00px;height:16.00px;line-height:16.00px;font-size:9.3px;white-space:nowrap;transform-origin:0 50%;transform:scaleX(0.9956);color:#ee1c2e;font-weight:bold;">Navigator</div>
<div style="left:196.00px;top:581.30px;width:799.30px;height:1.00px;background:#d6d6d6;"></div>
<div style="left:196.00px;top:582.30px;width:799.30px;height:16.60px;background:#fff;"></div>
<div id="f184" style="left:198.00px;top:585.00px;height:12.00px;line-height:12.00px;font-size:7.4px;white-space:nowrap;transform-origin:0 50%;transform:scaleX(0.9212);color:#3a2c46;">Calculation duration: 0 min, 1 s, 43 ms</div>
<svg style="left:0;top:0" width="1200" height="630" viewBox="0 0 1200 630"><path d="M316 122.5c3.5-1 5-4 6.4-7.6 1-2.6 2-3.7 4.4-3.7h19.4c1.2 0 1.7 0.6 1.7 1.8v9.5z" fill="#efefe9" stroke="#d2d2c8" stroke-width="0.6"/></svg>
<div style="left:237.90px;width:200px;text-align:center;top:111.00px;height:12.00px;line-height:12.00px;font-size:6.3px;white-space:nowrap;color:#1a1a1a;font-weight:bold;">Main</div>
<div style="left:314.70px;top:121.30px;width:532.90px;height:237.20px;background:#c9c9c3;border-radius:5px;"></div>
<div style="left:315.90px;top:122.40px;width:530.40px;height:234.90px;background:#fff;border:2.2px solid #8d8d87;border-radius:4px;"></div>
<svg style="left:0;top:0" width="1200" height="630" viewBox="0 0 1200 630"><path d="M829 113.6h4.8M829 115h4.8" stroke="#222" stroke-width="0.8"/><path d="M829.2 116.2h4.4l-2.2 2.2z" fill="#222"/><path d="M838.8 113.6l4.6 4.8M843.4 113.6l-4.6 4.8" stroke="#222" stroke-width="0.9"/></svg>
<div style="left:320.30px;top:126.40px;width:13.60px;height:13.20px;background:#e2e2e2;border:1px solid #d2d2d2;"></div>
<svg style="left:0;top:0" width="1200" height="630" viewBox="0 0 1200 630"><g stroke="#666" stroke-width="0.6" fill="none"><path d="M323 129l2.2 2.2M323 129h1.6M323 129v1.6"/><path d="M331.2 129l-2.2 2.2M331.2 129h-1.6M331.2 129v1.6"/><path d="M323 137l2.2-2.2M323 137h1.6M323 137v-1.6"/><path d="M331.2 137l-2.2-2.2M331.2 137h-1.6M331.2 137v-1.6"/></g></svg>
<div id="f192" style="left:355.20px;top:135.00px;height:16.00px;line-height:16.00px;font-size:9.3px;white-space:nowrap;transform-origin:0 50%;transform:scaleX(0.9975);color:#ee1c2e;font-weight:bold;">Main window</div>
<svg style="left:0;top:0" width="1200" height="630" viewBox="0 0 1200 630" font-family="Liberation Sans, Arial, sans-serif"><g stroke="#3c3c3c" stroke-width="0.7" fill="none"><path d="M400.4 169.7L484.8 168.3"/><path d="M400.4 186.9L484.8 185.4"/><path d="M400.6 165v13.4M400.8 182.4v13.6M484.6 164v13.4M484.8 181v13.6M443 182v6"/><path d="M443 187L444.6 250M444 190L445.4 246"/></g><path d="M398.18 172.60L402.82 166.80" stroke="#111" stroke-width="1.3"/><path d="M482.38 171.20L487.02 165.40" stroke="#111" stroke-width="1.3"/><path d="M398.38 189.80L403.02 184.00" stroke="#111" stroke-width="1.3"/><path d="M482.48 188.30L487.12 182.50" stroke="#111" stroke-width="1.3"/><path d="M440.68 189.00L445.32 183.20" stroke="#111" stroke-width="1.3"/><path d="M441.18 206.90L445.82 201.10" stroke="#111" stroke-width="1.3"/><path d="M441.58 223.90L446.22 218.10" stroke="#111" stroke-width="1.3"/><path d="M441.98 240.90L446.62 235.10" stroke="#111" stroke-width="1.3"/><path d="M441.34 207.20L446.46 200.80" stroke="#111" stroke-width="1.3"/><path d="M441.74 224.20L446.86 217.80" stroke="#111" stroke-width="1.3"/><path d="M442.14 241.20L447.26 234.80" stroke="#111" stroke-width="1.3"/><text x="443.00" y="163.00" font-size="8.4" fill="#3c3c3c" text-anchor="middle" dominant-baseline="central">150</text><text x="422.30" y="180.60" font-size="8.4" fill="#3c3c3c" text-anchor="middle" dominant-baseline="central">75</text><text x="463.60" y="179.80" font-size="8.4" fill="#3c3c3c" text-anchor="middle" dominant-baseline="central">75</text><text x="444.20" y="196.50" font-size="5.5" fill="#3c3c3c" text-anchor="middle" dominant-baseline="central">3</text><text x="444.60" y="213.50" font-size="5.5" fill="#3c3c3c" text-anchor="middle" dominant-baseline="central">2</text><text x="445.00" y="230.50" font-size="5.5" fill="#3c3c3c" text-anchor="middle" dominant-baseline="central">2</text><g stroke="#3c3c3c" stroke-width="0.7" fill="none"><path d="M342.6 251.6L344.8 334.6M360 251.6L362.3 334.6M377.5 255L379.8 330.2M395 255L397.2 321"/><path d="M339.2 251.65L351.6 251.45"/><path d="M341.4 334.65L353.8 334.45"/><path d="M356.6 251.65L369.0 251.45"/><path d="M357.4 280.85L369.8 280.65"/><path d="M358.9 334.65L371.3 334.45"/><path d="M374.1 255.05L386.5 254.85"/><path d="M374.9 280.85L387.3 280.65"/><path d="M376.4 330.25L388.8 330.05"/><path d="M391.6 255.05L404.0 254.85"/><path d="M392.5 280.85L404.9 280.65"/><path d="M393.8 321.05L406.2 320.85"/></g><path d="M340.28 254.50L344.92 248.70" stroke="#111" stroke-width="1.3"/><path d="M342.48 337.50L347.12 331.70" stroke="#111" stroke-width="1.3"/><path d="M357.68 254.50L362.32 248.70" stroke="#111" stroke-width="1.3"/><path d="M358.48 283.70L363.12 277.90" stroke="#111" stroke-width="1.3"/><path d="M359.98 337.50L364.62 331.70" stroke="#111" stroke-width="1.3"/><path d="M375.18 257.90L379.82 252.10" stroke="#111" stroke-width="1.3"/><path d="M375.98 283.70L380.62 277.90" stroke="#111" stroke-width="1.3"/><path d="M377.48 333.10L382.12 327.30" stroke="#111" stroke-width="1.3"/><path d="M392.68 257.90L397.32 252.10" stroke="#111" stroke-width="1.3"/><path d="M393.58 283.70L398.22 277.90" stroke="#111" stroke-width="1.3"/><path d="M394.88 323.90L399.52 318.10" stroke="#111" stroke-width="1.3"/><text x="349.60" y="293.50" font-size="8.4" fill="#3c3c3c" text-anchor="middle" dominant-baseline="central" transform="rotate(91.5 349.60 293.50)">150</text><text x="367.00" y="266.40" font-size="8.4" fill="#3c3c3c" text-anchor="middle" dominant-baseline="central" transform="rotate(91.5 367.00 266.40)">54</text><text x="367.80" y="308.00" font-size="8.4" fill="#3c3c3c" text-anchor="middle" dominant-baseline="central" transform="rotate(91.5 367.80 308.00)">96</text><text x="384.50" y="268.20" font-size="8.4" fill="#3c3c3c" text-anchor="middle" dominant-baseline="central" transform="rotate(91.5 384.50 268.20)">46</text><text x="385.20" y="305.70" font-size="8.4" fill="#3c3c3c" text-anchor="middle" dominant-baseline="central" transform="rotate(91.5 385.20 305.70)">89</text><text x="401.20" y="268.40" font-size="8.4" fill="#3c3c3c" text-anchor="middle" dominant-baseline="central" transform="rotate(91.5 401.20 268.40)">45</text><text x="403.00" y="301.00" font-size="8.4" fill="#3c3c3c" text-anchor="middle" dominant-baseline="central" transform="rotate(91.5 403.00 301.00)">74</text><g stroke="#3c3c3c" stroke-width="0.7" fill="none"><path d="M517.4 249.8L518.8 325M535 249.8L536.4 332.8"/><path d="M513.4 249.85L521.4 249.70"/><path d="M514.8 325.05L522.8 324.90"/><path d="M526.0 249.95L539.0 249.75"/><path d="M526.3 263.15L539.3 262.95"/><path d="M527.4 332.95L540.4 332.75"/></g><path d="M515.08 252.70L519.72 246.90" stroke="#111" stroke-width="1.3"/><path d="M516.48 327.90L521.12 322.10" stroke="#111" stroke-width="1.3"/><path d="M532.68 252.70L537.32 246.90" stroke="#111" stroke-width="1.3"/><path d="M532.98 265.90L537.62 260.10" stroke="#111" stroke-width="1.3"/><path d="M534.08 335.70L538.72 329.90" stroke="#111" stroke-width="1.3"/><text x="511.80" y="286.50" font-size="8.4" fill="#3c3c3c" text-anchor="middle" dominant-baseline="central" transform="rotate(-88.5 511.80 286.50)">136</text><text x="529.80" y="256.20" font-size="8.4" fill="#3c3c3c" text-anchor="middle" dominant-baseline="central" transform="rotate(-88.5 529.80 256.20)">26</text><text x="530.20" y="297.50" font-size="8.4" fill="#3c3c3c" text-anchor="middle" dominant-baseline="central" transform="rotate(-88.5 530.20 297.50)">126</text><defs><pattern id="hat" width="4.1" height="4.1" patternUnits="userSpaceOnUse" patternTransform="rotate(-52)"><rect width="4.1" height="4.1" fill="#f7f4c8"/><path d="M0 0.5h4.1" stroke="#9088e8" stroke-width="0.7"/></pattern></defs><path d="M438.7 264L438.9 319.9L433 320L433.2 333.5L458.6 333.2L458.4 319.6L451.6 319.7L451.4 263.4z" fill="#f5f2c4" stroke="#8c8c74" stroke-width="0.6"/><path d="M402.1 251.1L485.4 249.8L485.6 259L451.4 263.5L438.7 264L402.3 261.2z" fill="url(#hat)" stroke="#9288ea" stroke-width="0.7"/><path d="M385 280.9L489 278.8" stroke="#222" stroke-width="0.7" stroke-dasharray="5 1.6 1.2 1.6" fill="none"/><path d="M495 278.7l-5.6-1.3 0.1 2.7z" fill="#111"/><text x="497.60" y="277.20" font-size="8" fill="#333" text-anchor="middle" dominant-baseline="central">y</text><path d="M444.7 250L445.6 338" stroke="#333" stroke-width="0.6" stroke-dasharray="3 1.4" fill="none"/><path d="M444.4 244.6l-1.3 5.6 2.7-0.05z" fill="#111"/><path d="M442.6 251l4.6 4.6M447.2 251l-4.6 4.6" stroke="#333" stroke-width="0.6"/><path d="M443.2 324.8l3.6 3.6M446.8 324.8l-3.6 3.6" stroke="#333" stroke-width="0.5"/><text x="400.70" y="246.60" font-size="8.4" fill="#8a7ef2" text-anchor="middle" dominant-baseline="central">1</text><text x="490.80" y="245.00" font-size="8.4" fill="#8a7ef2" text-anchor="middle" dominant-baseline="central">12</text><text x="399.80" y="266.60" font-size="8.4" fill="#8a7ef2" text-anchor="middle" dominant-baseline="central">2</text><text x="435.40" y="268.40" font-size="8.4" fill="#8a7ef2" text-anchor="middle" dominant-baseline="central">3</text><text x="456.40" y="268.20" font-size="8.4" fill="#8a7ef2" text-anchor="middle" dominant-baseline="central">10</text><text x="490.60" y="264.60" font-size="8.4" fill="#8a7ef2" text-anchor="middle" dominant-baseline="central">11</text><text x="430.20" y="316.20" font-size="8.4" fill="#8a7ef2" text-anchor="middle" dominant-baseline="central">5</text><text x="460.60" y="315.80" font-size="8.4" fill="#8a7ef2" text-anchor="middle" dominant-baseline="central">8</text><text x="430.80" y="338.60" font-size="8.4" fill="#8a7ef2" text-anchor="middle" dominant-baseline="central">6</text><text x="460.20" y="338.20" font-size="8.4" fill="#8a7ef2" text-anchor="middle" dominant-baseline="central">7</text><text x="438.20" y="314.60" font-size="8.4" fill="#8a7ef2" text-anchor="middle" dominant-baseline="central">4</text><text x="453.60" y="314.20" font-size="8.4" fill="#8a7ef2" text-anchor="middle" dominant-baseline="central">9</text><text x="406.80" y="261.40" font-size="8" fill="#8e2a24" text-anchor="middle" dominant-baseline="central">11</text><text x="444.20" y="259.40" font-size="8" fill="#8e2a24" text-anchor="middle" dominant-baseline="central">32</text><text x="482.60" y="260.60" font-size="8" fill="#8e2a24" text-anchor="middle" dominant-baseline="central">10</text><text x="445.40" y="312.40" font-size="8" fill="#8e2a24" text-anchor="middle" dominant-baseline="central">136</text><text x="444.40" y="268.60" font-size="8" fill="#8e2a24" text-anchor="middle" dominant-baseline="central">12</text><text x="436.40" y="318.60" font-size="8" fill="#8e2a24" text-anchor="middle" dominant-baseline="central">15</text><text x="455.40" y="318.20" font-size="8" fill="#8e2a24" text-anchor="middle" dominant-baseline="central">14</text><text x="439.40" y="323.60" font-size="8" fill="#2a2ad8" text-anchor="middle" dominant-baseline="central">1</text><text x="446.60" y="323.40" font-size="8" fill="#2a2ad8" text-anchor="middle" dominant-baseline="central">2</text><text x="454.00" y="323.20" font-size="8" fill="#2a2ad8" text-anchor="middle" dominant-baseline="central">3</text><circle cx="405.2" cy="253.6" r="0.75" fill="#d82a20"/><circle cx="405.4" cy="258.4" r="0.75" fill="#d82a20"/><circle cx="482.4" cy="252.6" r="0.75" fill="#d82a20"/><circle cx="482.6" cy="257.4" r="0.75" fill="#d82a20"/><circle cx="441.6" cy="254.4" r="0.75" fill="#d82a20"/><circle cx="447.6" cy="254.2" r="0.75" fill="#d82a20"/><circle cx="441.8" cy="262" r="0.75" fill="#d82a20"/><circle cx="447.8" cy="261.8" r="0.75" fill="#d82a20"/><circle cx="441" cy="317" r="0.75" fill="#d82a20"/><circle cx="449.4" cy="316.8" r="0.75" fill="#d82a20"/><circle cx="436.4" cy="322.8" r="0.75" fill="#d82a20"/><circle cx="456" cy="322.4" r="0.75" fill="#d82a20"/><circle cx="439.2" cy="329.4" r="1.7" fill="#e02020" stroke="#2a2ad8" stroke-width="0.6"/><rect x="444.6" y="327.8" width="3.2" height="3.2" fill="#1a1ab0"/><circle cx="454.3" cy="329.2" r="1.8" fill="#1a1ad0"/><text x="590.20" y="139.00" font-size="8.6" fill="#3e3e3e" text-anchor="middle" dominant-baseline="central">σi [MPa]</text><text x="667.80" y="139.00" font-size="8.6" fill="#3e3e3e" text-anchor="middle" dominant-baseline="central">Δ σ [MPa]</text><text x="744.00" y="139.00" font-size="8.6" fill="#3e3e3e" text-anchor="middle" dominant-baseline="central">σ [MPa]</text><text x="609.80" y="244.20" font-size="8.6" fill="#3e3e3e" text-anchor="middle" dominant-baseline="central">εi [1e-4]</text><text x="668.40" y="244.20" font-size="8.6" fill="#3e3e3e" text-anchor="middle" dominant-baseline="central">Δ ε [1e-4]</text><text x="771.00" y="244.20" font-size="8.6" fill="#3e3e3e" text-anchor="middle" dominant-baseline="central">ε [1e-4]</text><rect x="597.9" y="144.3" width="5.2" height="84" fill="#fff" stroke="#ffb04a" stroke-width="0.9"/><path d="M597.9 148.4h5.2M597.9 152.7h5.2M597.9 156.9h5.2M597.9 161.2h5.2M597.9 165.4h5.2M597.9 169.7h5.2M597.9 173.9h5.2M597.9 178.2h5.2M597.9 182.4h5.2M597.9 186.7h5.2M597.9 190.9h5.2M597.9 195.2h5.2M597.9 199.4h5.2M597.9 203.7h5.2M597.9 207.9h5.2M597.9 212.2h5.2M597.9 216.4h5.2M597.9 220.7h5.2M597.9 224.9h5.2" stroke="#ffb04a" stroke-width="0.9" fill="none"/><rect x="597.9" y="155" width="5.2" height="3.6" fill="#ffb04a"/><rect x="597.9" y="214.6" width="5.2" height="2.4" fill="#ffb04a"/><path d="M602.6 144.4l1.6 1v11l-1.4 1.4" stroke="#ffb04a" stroke-width="0.6" fill="none"/><path d="M572.8 224.4h25" stroke="#ff8a00" stroke-width="2.2"/><text x="572.40" y="224.60" font-size="8.1" fill="#ff8a00" text-anchor="end" dominant-baseline="central">1129,1</text><text x="603.60" y="227.80" font-size="8.1" fill="#ffb04a" text-anchor="start" dominant-baseline="central">-4,8</text><path d="M655.6 144.6H675.6C670 152 662 156 655.6 157.4L650.6 158.4V228.2H655.6z" fill="#fff" stroke="#93c83e" stroke-width="0.9"/><path d="M655.6 144.4V228.2" stroke="#93c83e" stroke-width="0.8"/><path d="M655.6 144.9H675" stroke="#93c83e" stroke-width="1.6"/><path d="M650.6 162.6h5M650.6 166.8h5M650.6 171.1h5M650.6 175.3h5M650.6 179.6h5M650.6 183.8h5M650.6 188.1h5M650.6 192.3h5M650.6 196.6h5M650.6 200.8h5M650.6 205.1h5M650.6 209.3h5M650.6 213.6h5M650.6 217.8h5M650.6 222.1h5M650.6 226.3h5M655.6 148.4h15.6M655.6 151h11.6M655.6 153.6h7.4" stroke="#93c83e" stroke-width="0.8" fill="none"/><rect x="650.6" y="214.4" width="5" height="2.6" fill="#93c83e"/><rect x="650.6" y="226" width="5" height="2" fill="#93c83e"/><path d="M648.4 224.3h7.6" stroke="#1e6a22" stroke-width="2.4"/><text x="678.80" y="144.40" font-size="8.1" fill="#93c83e" text-anchor="start" dominant-baseline="central">14,7</text><text x="648.20" y="224.60" font-size="8.1" fill="#2f7d3a" text-anchor="end" dominant-baseline="central">342,8</text><path d="M759.9 143.9V228.2" stroke="#9a8ef6" stroke-width="0.8"/><path d="M759.9 144.5H785.2C781 151 770 156 759.9 158.2" fill="none" stroke="#9a8ef6" stroke-width="0.8"/><path d="M759.9 147.2h23.4M759.9 150h19.6M759.9 152.8h14M759.9 155.6h7.6M759.9 158.2l24-13.4" stroke="#9a8ef6" stroke-width="0.6" fill="none"/><path d="M728.2 224.3h32" stroke="#ff4a12" stroke-width="2.6"/><text x="785.60" y="144.60" font-size="8.1" fill="#9a8ef6" text-anchor="start" dominant-baseline="central">-19,4</text><text x="728.00" y="224.60" font-size="8.1" fill="#ff4a12" text-anchor="end" dominant-baseline="central">1471,9</text><rect x="597.3" y="249.3" width="3.4" height="84.2" fill="#fff" stroke="#ffb04a" stroke-width="0.8"/><path d="M597.3 262.6h3.4M597.3 319.6h3.4M597.3 321.4h3.4M599 249.3v84" stroke="#ffb04a" stroke-width="0.5" fill="none"/><path d="M594 329.4h3.4" stroke="#ff8a00" stroke-width="1.8"/><text x="593.80" y="329.50" font-size="8.1" fill="#ff8a00" text-anchor="end" dominant-baseline="central">57,9</text><text x="601.20" y="333.20" font-size="8.1" fill="#ffb04a" text-anchor="start" dominant-baseline="central">-4,8</text><path d="M704.6 249.3V333.5H650L712.8 249.8H704.6" fill="none" stroke="#93c83e" stroke-width="0.8"/><path d="M659 319.8H704.6" stroke="#93c83e" stroke-width="2"/><path d="M651 332.6H704.6" stroke="#93c83e" stroke-width="1.6"/><path d="M652.4 329.4H704.8" stroke="#1e6a22" stroke-width="2.6"/><text x="649.80" y="334.00" font-size="8.1" fill="#93c83e" text-anchor="end" dominant-baseline="central">86,1</text><text x="651.80" y="329.00" font-size="8.1" fill="#2f7d3a" text-anchor="end" dominant-baseline="central">81,6</text><text x="713.40" y="249.70" font-size="8.1" fill="#93c83e" text-anchor="start" dominant-baseline="central">-11,9</text><path d="M808.2 249.3V333.5H757.5L818.6 249.8H808.2" fill="none" stroke="#9a8ef6" stroke-width="0.8"/><path d="M816.0 253.4H808.2M812.9 257.6H808.2M809.8 261.8H808.2M806.8 266.0H808.2M803.7 270.2H808.2M800.6 274.4H808.2M797.6 278.6H808.2M794.5 282.8H808.2M791.4 287.0H808.2M788.4 291.2H808.2M785.3 295.4H808.2M782.2 299.6H808.2M779.2 303.8H808.2M776.1 308.0H808.2M773.0 312.2H808.2M770.0 316.4H808.2M766.9 320.6H808.2M763.9 324.8H808.2M760.8 329.0H808.2" stroke="#9a8ef6" stroke-width="0.6" fill="none"/><path d="M804.8 329.4h3.6" stroke="#1a1ab8" stroke-width="2"/><text x="818.80" y="249.70" font-size="8.1" fill="#9a8ef6" text-anchor="start" dominant-baseline="central">-16,6</text><text x="755.80" y="333.50" font-size="8.1" fill="#9a8ef6" text-anchor="end" dominant-baseline="central">81,8</text><text x="804.60" y="329.50" font-size="8.1" fill="#1a1ab8" text-anchor="end" dominant-baseline="central">139,5</text></svg>
<div style="left:315.40px;top:361.60px;width:531.40px;height:219.50px;background:#fff;border:1px solid #dcdcdc;border-radius:2px 3px 0 0;"></div>
<div style="left:316.40px;top:362.40px;width:529.40px;height:9.80px;background:#f2f2f2;border-radius:1px 2px 0 0;"></div>
<div style="left:317.20px;top:363.00px;height:12.00px;line-height:12.00px;font-size:6.0px;white-space:nowrap;color:#555;">Data</div>
<svg style="left:0;top:0" width="1200" height="630" viewBox="0 0 1200 630"><path d="M820.6999999999999 365.9h4.4l-2.2 2.4z" fill="#cdc794"/><path d="M830.4 364.5h1.8v3.2h-1.8zM829.6999999999999 367.7h3.2M831.3 367.7v2" stroke="#cdc794" stroke-width="0.6" fill="none"/><path d="M838.9 364.7l4.4 4.4M843.3000000000001 364.7l-4.4 4.4" stroke="#cdc794" stroke-width="0.7" fill="none"/></svg>
<div style="left:316.40px;top:372.20px;width:529.40px;height:11.40px;background:#fff;border-bottom:1px solid #d9dce2;"></div>
<div style="left:316.40px;top:372.30px;width:439.90px;height:11.20px;background:linear-gradient(#eeeeee,#e6e6e6 45%,#d7d7d7);border-top:1px solid #d9dfea;border-radius:2px 3px 0 0;"></div>
<div style="left:232.60px;width:200px;text-align:center;top:373.00px;height:12.00px;line-height:12.00px;font-size:6.1px;white-space:nowrap;color:#3c3c3c;">Overall</div>
<div style="left:348.30px;top:373.20px;width:1.00px;height:10.20px;background:linear-gradient(#e9edf4,#e2e4ea);"></div>
<div style="left:277.05px;width:200px;text-align:center;top:373.00px;height:12.00px;line-height:12.00px;font-size:6.1px;white-space:nowrap;color:#3c3c3c;">Capacity N-M-M</div>
<div style="left:404.80px;top:373.20px;width:1.00px;height:10.20px;background:linear-gradient(#e9edf4,#e2e4ea);"></div>
<div style="left:319.75px;width:200px;text-align:center;top:373.00px;height:12.00px;line-height:12.00px;font-size:6.1px;white-space:nowrap;color:#3c3c3c;">Shear</div>
<div style="left:433.70px;top:373.20px;width:1.00px;height:10.20px;background:linear-gradient(#e9edf4,#e2e4ea);"></div>
<div style="left:350.80px;width:200px;text-align:center;top:373.00px;height:12.00px;line-height:12.00px;font-size:6.1px;white-space:nowrap;color:#3c3c3c;">Torsion</div>
<div style="left:466.90px;top:373.20px;width:1.00px;height:10.20px;background:linear-gradient(#e9edf4,#e2e4ea);"></div>
<div style="left:387.85px;width:200px;text-align:center;top:373.00px;height:12.00px;line-height:12.00px;font-size:6.1px;white-space:nowrap;color:#3c3c3c;">Interaction</div>
<div style="left:507.80px;top:373.20px;width:1.00px;height:10.20px;background:linear-gradient(#e9edf4,#e2e4ea);"></div>
<div style="left:437.55px;width:200px;text-align:center;top:373.00px;height:12.00px;line-height:12.00px;font-size:6.1px;white-space:nowrap;color:#3c3c3c;">Stress Limitation</div>
<div style="left:566.30px;top:373.20px;width:1.00px;height:10.20px;background:linear-gradient(#e9edf4,#e2e4ea);"></div>
<div style="left:489.85px;width:200px;text-align:center;top:373.00px;height:12.00px;line-height:12.00px;font-size:6.1px;white-space:nowrap;color:#3c3c3c;">Crack Width</div>
<div style="left:612.40px;top:373.20px;width:1.00px;height:10.20px;background:linear-gradient(#e9edf4,#e2e4ea);"></div>
<div style="left:531.05px;width:200px;text-align:center;top:373.00px;height:12.00px;line-height:12.00px;font-size:6.1px;white-space:nowrap;color:#3c3c3c;">Detailing</div>
<div style="left:649.20px;top:372.20px;width:61.90px;height:11.40px;background:linear-gradient(#f9d47e,#f5c65e);border-radius:4px 4px 0 0;"></div>
<div style="left:580.15px;width:200px;text-align:center;top:373.00px;height:12.00px;line-height:12.00px;font-size:6.1px;white-space:nowrap;color:#3c3c3c;">Response N-M-M</div>
<div style="left:710.60px;top:373.20px;width:1.00px;height:10.20px;background:linear-gradient(#e9edf4,#e2e4ea);"></div>
<div style="left:633.70px;width:200px;text-align:center;top:373.00px;height:12.00px;line-height:12.00px;font-size:6.1px;white-space:nowrap;color:#3c3c3c;">Stiffnesses</div>
<div style="left:834.00px;top:386.00px;width:9.60px;height:194.40px;background:#f0f0f0;"></div>
<div style="left:834.60px;top:406.10px;width:8.40px;height:38.20px;background:#c9c9c9;"></div>
<svg style="left:0;top:0" width="1200" height="630" viewBox="0 0 1200 630"><path d="M835.6 400.2l3.2-3 3.2 3M835.6 564.4l3.2 3 3.2-3" stroke="#333" stroke-width="1.1" fill="none"/></svg>
<div id="f222" style="left:323.90px;top:393.00px;height:16.00px;line-height:16.00px;font-size:9.2px;white-space:nowrap;transform-origin:0 50%;transform:scaleX(0.9727);color:#111;font-weight:bold;">Response N-M-M</div>
<div id="f223" style="left:323.90px;top:407.00px;height:12.00px;line-height:12.00px;font-size:6.8px;white-space:nowrap;transform-origin:0 50%;transform:scaleX(1.0177);color:#1a1a1a;font-weight:bold;">Results presented for combination : Fundamental ULS</div>
<div id="f224" style="left:323.90px;top:450.00px;height:12.00px;line-height:12.00px;font-size:6.8px;white-space:nowrap;transform-origin:0 50%;transform:scaleX(0.9991);color:#1a1a1a;font-weight:bold;">Plane of strain</div>
<div id="f225" style="left:323.90px;top:491.00px;height:12.00px;line-height:12.00px;font-size:6.8px;white-space:nowrap;transform-origin:0 50%;transform:scaleX(1.0133);color:#1a1a1a;font-weight:bold;">Forces in components of cross-section</div>
<div id="f226" style="left:684.60px;top:398.00px;height:16.00px;line-height:16.00px;font-size:9.3px;white-space:nowrap;transform-origin:0 50%;transform:scaleX(0.9925);color:#ee1c2e;font-weight:bold;">Data window</div>
<div style="left:323.40px;top:417.20px;width:346.40px;height:29.90px;background:#fff;border:1.6px solid #2a2a2a;"></div>
<div style="left:324.60px;top:418.40px;width:344.00px;height:18.30px;background:#dcdcdc;"></div>
<div style="left:357.20px;top:418.20px;width:0.90px;height:27.90px;background:#9a9a9a;"></div>
<div style="left:388.90px;top:418.20px;width:0.90px;height:27.90px;background:#9a9a9a;"></div>
<div style="left:420.30px;top:418.20px;width:0.90px;height:27.90px;background:#9a9a9a;"></div>
<div style="left:471.90px;top:418.20px;width:0.90px;height:27.90px;background:#9a9a9a;"></div>
<div style="left:523.00px;top:418.20px;width:0.90px;height:27.90px;background:#9a9a9a;"></div>
<div style="left:581.90px;top:418.20px;width:0.90px;height:27.90px;background:#9a9a9a;"></div>
<div style="left:610.70px;top:418.20px;width:0.90px;height:27.90px;background:#9a9a9a;"></div>
<div style="left:637.70px;top:418.20px;width:0.90px;height:27.90px;background:#9a9a9a;"></div>
<div style="left:324.40px;top:436.40px;width:344.40px;height:0.70px;background:#c4c4c4;"></div>
<div style="left:240.50px;width:200px;text-align:center;top:419.00px;height:12.00px;line-height:12.00px;font-size:6.8px;white-space:nowrap;color:#222;font-weight:bold;">N<span style="font-size:4.6px;position:relative;top:1.1px">Ed,tot</span></div>
<div style="left:240.50px;width:200px;text-align:center;top:427.00px;height:12.00px;line-height:12.00px;font-size:6.8px;white-space:nowrap;color:#333;">[kN]</div>
<div style="left:273.40px;width:200px;text-align:center;top:419.00px;height:12.00px;line-height:12.00px;font-size:6.8px;white-space:nowrap;color:#222;font-weight:bold;">M<span style="font-size:4.6px;position:relative;top:1.1px">Ed,ytot</span></div>
<div style="left:273.40px;width:200px;text-align:center;top:427.00px;height:12.00px;line-height:12.00px;font-size:6.8px;white-space:nowrap;color:#333;">[kNm]</div>
<div style="left:305.00px;width:200px;text-align:center;top:419.00px;height:12.00px;line-height:12.00px;font-size:6.8px;white-space:nowrap;color:#222;font-weight:bold;">M<span style="font-size:4.6px;position:relative;top:1.1px">Ed,ztot</span></div>
<div style="left:305.00px;width:200px;text-align:center;top:427.00px;height:12.00px;line-height:12.00px;font-size:6.8px;white-space:nowrap;color:#333;">[kNm]</div>
<div style="left:346.50px;width:200px;text-align:center;top:419.00px;height:12.00px;line-height:12.00px;font-size:6.8px;white-space:nowrap;color:#222;font-weight:bold;">Concrete</div>
<div style="left:346.50px;width:200px;text-align:center;top:427.00px;height:12.00px;line-height:12.00px;font-size:6.8px;white-space:nowrap;color:#222;font-weight:bold;">fibre</div>
<div style="left:397.80px;width:200px;text-align:center;top:419.00px;height:12.00px;line-height:12.00px;font-size:6.8px;white-space:nowrap;color:#222;font-weight:bold;">Extreme in</div>
<div style="left:397.80px;width:200px;text-align:center;top:427.00px;height:12.00px;line-height:12.00px;font-size:6.8px;white-space:nowrap;color:#222;font-weight:bold;">bar</div>
<div style="left:452.80px;width:200px;text-align:center;top:419.00px;height:12.00px;line-height:12.00px;font-size:6.8px;white-space:nowrap;color:#222;font-weight:bold;">Extreme in</div>
<div style="left:452.80px;width:200px;text-align:center;top:427.00px;height:12.00px;line-height:12.00px;font-size:6.8px;white-space:nowrap;color:#222;font-weight:bold;">tendon</div>
<div style="left:496.70px;width:200px;text-align:center;top:419.00px;height:12.00px;line-height:12.00px;font-size:6.8px;white-space:nowrap;color:#222;font-weight:bold;">Value</div>
<div style="left:496.70px;width:200px;text-align:center;top:427.00px;height:12.00px;line-height:12.00px;font-size:6.8px;white-space:nowrap;color:#333;">[%]</div>
<div style="left:524.60px;width:200px;text-align:center;top:419.00px;height:12.00px;line-height:12.00px;font-size:6.8px;white-space:nowrap;color:#222;font-weight:bold;">Limit</div>
<div style="left:524.60px;width:200px;text-align:center;top:427.00px;height:12.00px;line-height:12.00px;font-size:6.8px;white-space:nowrap;color:#333;">[%]</div>
<div style="left:554.00px;width:200px;text-align:center;top:423.00px;height:12.00px;line-height:12.00px;font-size:6.8px;white-space:nowrap;color:#222;font-weight:bold;">Check</div>
<div style="left:154.30px;width:200px;text-align:right;top:438.00px;height:12.00px;line-height:12.00px;font-size:6.8px;white-space:nowrap;color:#333;">-3048,7</div>
<div style="left:186.00px;width:200px;text-align:right;top:438.00px;height:12.00px;line-height:12.00px;font-size:6.8px;white-space:nowrap;color:#333;">3277,8</div>
<div style="left:217.40px;width:200px;text-align:right;top:438.00px;height:12.00px;line-height:12.00px;font-size:6.8px;white-space:nowrap;color:#333;">61,0</div>
<div style="left:425.40px;top:438.00px;height:12.00px;line-height:12.00px;font-size:6.8px;white-space:nowrap;color:#333;">12</div>
<div style="left:477.00px;top:438.00px;height:12.00px;line-height:12.00px;font-size:6.8px;white-space:nowrap;color:#333;">15</div>
<div style="left:528.20px;top:438.00px;height:12.00px;line-height:12.00px;font-size:6.8px;white-space:nowrap;color:#333;">1</div>
<div style="left:407.40px;width:200px;text-align:right;top:438.00px;height:12.00px;line-height:12.00px;font-size:6.8px;white-space:nowrap;color:#333;">100,0</div>
<div style="left:434.60px;width:200px;text-align:right;top:438.00px;height:12.00px;line-height:12.00px;font-size:6.8px;white-space:nowrap;color:#333;">100,0</div>
<div style="left:643.40px;top:438.00px;height:12.00px;line-height:12.00px;font-size:6.8px;white-space:nowrap;color:#333;">OK</div>
<div style="left:323.40px;top:459.40px;width:346.40px;height:30.20px;background:#fff;border:1.6px solid #2a2a2a;"></div>
<div style="left:324.60px;top:460.60px;width:344.00px;height:18.30px;background:#dcdcdc;"></div>
<div style="left:377.00px;top:460.40px;width:0.90px;height:28.20px;background:#9a9a9a;"></div>
<div style="left:421.10px;top:460.40px;width:0.90px;height:28.20px;background:#9a9a9a;"></div>
<div style="left:465.60px;top:460.40px;width:0.90px;height:28.20px;background:#9a9a9a;"></div>
<div style="left:509.50px;top:460.40px;width:0.90px;height:28.20px;background:#9a9a9a;"></div>
<div style="left:562.70px;top:460.40px;width:0.90px;height:28.20px;background:#9a9a9a;"></div>
<div style="left:614.90px;top:460.40px;width:0.90px;height:28.20px;background:#9a9a9a;"></div>
<div style="left:324.40px;top:478.60px;width:344.40px;height:0.70px;background:#c4c4c4;"></div>
<div style="left:250.40px;width:200px;text-align:center;top:461.00px;height:12.00px;line-height:12.00px;font-size:6.8px;white-space:nowrap;color:#222;font-weight:bold;">x,add</div>
<div style="left:250.40px;width:200px;text-align:center;top:469.00px;height:12.00px;line-height:12.00px;font-size:6.8px;white-space:nowrap;color:#333;">[cm]</div>
<div style="left:173.10px;width:200px;text-align:right;top:480.00px;height:12.00px;line-height:12.00px;font-size:6.8px;white-space:nowrap;color:#333;">18</div>
<div style="left:299.40px;width:200px;text-align:center;top:461.00px;height:12.00px;line-height:12.00px;font-size:6.8px;white-space:nowrap;color:#222;font-weight:bold;">x</div>
<div style="left:299.40px;width:200px;text-align:center;top:469.00px;height:12.00px;line-height:12.00px;font-size:6.8px;white-space:nowrap;color:#333;">[cm]</div>
<div style="left:217.10px;width:200px;text-align:right;top:480.00px;height:12.00px;line-height:12.00px;font-size:6.8px;white-space:nowrap;color:#333;">26</div>
<div style="left:343.60px;width:200px;text-align:center;top:461.00px;height:12.00px;line-height:12.00px;font-size:6.8px;white-space:nowrap;color:#222;font-weight:bold;">d</div>
<div style="left:343.60px;width:200px;text-align:center;top:469.00px;height:12.00px;line-height:12.00px;font-size:6.8px;white-space:nowrap;color:#333;">[cm]</div>
<div style="left:261.20px;width:200px;text-align:right;top:480.00px;height:12.00px;line-height:12.00px;font-size:6.8px;white-space:nowrap;color:#333;">136</div>
<div style="left:388.20px;width:200px;text-align:center;top:461.00px;height:12.00px;line-height:12.00px;font-size:6.8px;white-space:nowrap;color:#222;font-weight:bold;">z</div>
<div style="left:388.20px;width:200px;text-align:center;top:469.00px;height:12.00px;line-height:12.00px;font-size:6.8px;white-space:nowrap;color:#333;">[cm]</div>
<div style="left:305.20px;width:200px;text-align:right;top:480.00px;height:12.00px;line-height:12.00px;font-size:6.8px;white-space:nowrap;color:#333;">128</div>
<div style="left:436.60px;width:200px;text-align:center;top:461.00px;height:12.00px;line-height:12.00px;font-size:6.8px;white-space:nowrap;color:#222;font-weight:bold;">ε<span style="font-size:4.6px;position:relative;top:1.1px">x</span></div>
<div style="left:436.60px;width:200px;text-align:center;top:469.00px;height:12.00px;line-height:12.00px;font-size:6.8px;white-space:nowrap;color:#333;">[1e-4]</div>
<div style="left:358.00px;width:200px;text-align:right;top:480.00px;height:12.00px;line-height:12.00px;font-size:6.8px;white-space:nowrap;color:#333;">23,3</div>
<div style="left:489.30px;width:200px;text-align:center;top:461.00px;height:12.00px;line-height:12.00px;font-size:6.8px;white-space:nowrap;color:#222;font-weight:bold;">φ<span style="font-size:4.6px;position:relative;top:1.1px">z</span></div>
<div style="left:489.30px;width:200px;text-align:center;top:469.00px;height:12.00px;line-height:12.00px;font-size:6.8px;white-space:nowrap;color:#333;">[1e-4]</div>
<div style="left:411.10px;width:200px;text-align:right;top:480.00px;height:12.00px;line-height:12.00px;font-size:6.8px;white-space:nowrap;color:#333;">-0,2</div>
<div style="left:542.80px;width:200px;text-align:center;top:461.00px;height:12.00px;line-height:12.00px;font-size:6.8px;white-space:nowrap;color:#222;font-weight:bold;">φ<span style="font-size:4.6px;position:relative;top:1.1px">y</span></div>
<div style="left:542.80px;width:200px;text-align:center;top:469.00px;height:12.00px;line-height:12.00px;font-size:6.8px;white-space:nowrap;color:#333;">[1e-4]</div>
<div style="left:464.20px;width:200px;text-align:right;top:480.00px;height:12.00px;line-height:12.00px;font-size:6.8px;white-space:nowrap;color:#333;">-65,2</div>
<div style="left:323.40px;top:501.20px;width:346.40px;height:74.20px;background:#fff;border:1.6px solid #2a2a2a;"></div>
<div style="left:324.60px;top:502.40px;width:344.00px;height:18.70px;background:#dcdcdc;"></div>
<div style="left:457.00px;top:502.20px;width:0.90px;height:72.20px;background:#9a9a9a;"></div>
<div style="left:500.00px;top:502.20px;width:0.90px;height:72.20px;background:#9a9a9a;"></div>
<div style="left:539.70px;top:502.20px;width:0.90px;height:72.20px;background:#9a9a9a;"></div>
<div style="left:577.00px;top:502.20px;width:0.90px;height:72.20px;background:#9a9a9a;"></div>
<div style="left:609.60px;top:502.20px;width:0.90px;height:72.20px;background:#9a9a9a;"></div>
<div style="left:638.90px;top:502.20px;width:0.90px;height:72.20px;background:#9a9a9a;"></div>
<div style="left:324.40px;top:520.80px;width:344.40px;height:0.70px;background:#c4c4c4;"></div>
<div style="left:324.40px;top:531.50px;width:344.40px;height:0.70px;background:#c4c4c4;"></div>
<div style="left:324.40px;top:542.40px;width:344.40px;height:0.70px;background:#c4c4c4;"></div>
<div style="left:324.40px;top:553.30px;width:344.40px;height:0.70px;background:#c4c4c4;"></div>
<div style="left:324.40px;top:564.20px;width:344.40px;height:0.70px;background:#c4c4c4;"></div>
<div style="left:290.60px;width:200px;text-align:center;top:507.00px;height:12.00px;line-height:12.00px;font-size:6.8px;white-space:nowrap;color:#222;font-weight:bold;">Component of css</div>
<div style="left:379.00px;width:200px;text-align:center;top:503.00px;height:12.00px;line-height:12.00px;font-size:6.8px;white-space:nowrap;color:#222;font-weight:bold;">N</div>
<div style="left:379.00px;width:200px;text-align:center;top:511.00px;height:12.00px;line-height:12.00px;font-size:6.8px;white-space:nowrap;color:#333;">[kN]</div>
<div style="left:420.60px;width:200px;text-align:center;top:503.00px;height:12.00px;line-height:12.00px;font-size:6.8px;white-space:nowrap;color:#222;font-weight:bold;">M<span style="font-size:4.6px;position:relative;top:1.1px">y</span></div>
<div style="left:420.60px;width:200px;text-align:center;top:511.00px;height:12.00px;line-height:12.00px;font-size:6.8px;white-space:nowrap;color:#333;">[kNm]</div>
<div style="left:458.70px;width:200px;text-align:center;top:503.00px;height:12.00px;line-height:12.00px;font-size:6.8px;white-space:nowrap;color:#222;font-weight:bold;">M<span style="font-size:4.6px;position:relative;top:1.1px">z</span></div>
<div style="left:458.70px;width:200px;text-align:center;top:511.00px;height:12.00px;line-height:12.00px;font-size:6.8px;white-space:nowrap;color:#333;">[kNm]</div>
<div style="left:493.30px;width:200px;text-align:center;top:503.00px;height:12.00px;line-height:12.00px;font-size:6.8px;white-space:nowrap;color:#222;font-weight:bold;">A</div>
<div style="left:493.30px;width:200px;text-align:center;top:511.00px;height:12.00px;line-height:12.00px;font-size:6.8px;white-space:nowrap;color:#333;">[cm<span style="font-size:4.4px;position:relative;top:-2px">2</span>]</div>
<div style="left:524.60px;width:200px;text-align:center;top:503.00px;height:12.00px;line-height:12.00px;font-size:6.8px;white-space:nowrap;color:#222;font-weight:bold;">y<span style="font-size:4.6px;position:relative;top:1.1px">i</span></div>
<div style="left:524.60px;width:200px;text-align:center;top:511.00px;height:12.00px;line-height:12.00px;font-size:6.8px;white-space:nowrap;color:#333;">[cm]</div>
<div style="left:554.40px;width:200px;text-align:center;top:503.00px;height:12.00px;line-height:12.00px;font-size:6.8px;white-space:nowrap;color:#222;font-weight:bold;">z<span style="font-size:4.6px;position:relative;top:1.1px">i</span></div>
<div style="left:554.40px;width:200px;text-align:center;top:511.00px;height:12.00px;line-height:12.00px;font-size:6.8px;white-space:nowrap;color:#333;">[cm]</div>
<div style="left:329.00px;top:522.00px;height:12.00px;line-height:12.00px;font-size:6.8px;white-space:nowrap;color:#333;">Concrete</div>
<div style="left:296.00px;width:200px;text-align:right;top:522.00px;height:12.00px;line-height:12.00px;font-size:6.8px;white-space:nowrap;color:#333;">-4116,9</div>
<div style="left:335.70px;width:200px;text-align:right;top:522.00px;height:12.00px;line-height:12.00px;font-size:6.8px;white-space:nowrap;color:#333;">1861,7</div>
<div style="left:371.80px;width:200px;text-align:right;top:522.00px;height:12.00px;line-height:12.00px;font-size:6.8px;white-space:nowrap;color:#333;">66,0</div>
<div style="left:404.90px;width:200px;text-align:right;top:522.00px;height:12.00px;line-height:12.00px;font-size:6.8px;white-space:nowrap;color:#333;">2691</div>
<div style="left:434.50px;width:200px;text-align:right;top:522.00px;height:12.00px;line-height:12.00px;font-size:6.8px;white-space:nowrap;color:#333;">2</div>
<div style="left:464.20px;width:200px;text-align:right;top:522.00px;height:12.00px;line-height:12.00px;font-size:6.8px;white-space:nowrap;color:#333;">45</div>
<div style="left:329.00px;top:533.00px;height:12.00px;line-height:12.00px;font-size:6.8px;white-space:nowrap;color:#333;">Reinforcement in tension</div>
<div style="left:296.00px;width:200px;text-align:right;top:533.00px;height:12.00px;line-height:12.00px;font-size:6.8px;white-space:nowrap;color:#333;">546,4</div>
<div style="left:335.70px;width:200px;text-align:right;top:533.00px;height:12.00px;line-height:12.00px;font-size:6.8px;white-space:nowrap;color:#333;">403,5</div>
<div style="left:371.80px;width:200px;text-align:right;top:533.00px;height:12.00px;line-height:12.00px;font-size:6.8px;white-space:nowrap;color:#333;">0,0</div>
<div style="left:404.90px;width:200px;text-align:right;top:533.00px;height:12.00px;line-height:12.00px;font-size:6.8px;white-space:nowrap;color:#333;">13</div>
<div style="left:434.50px;width:200px;text-align:right;top:533.00px;height:12.00px;line-height:12.00px;font-size:6.8px;white-space:nowrap;color:#333;">0</div>
<div style="left:464.20px;width:200px;text-align:right;top:533.00px;height:12.00px;line-height:12.00px;font-size:6.8px;white-space:nowrap;color:#333;">-74</div>
<div style="left:329.00px;top:544.00px;height:12.00px;line-height:12.00px;font-size:6.8px;white-space:nowrap;color:#333;">Reinforcement in compression</div>
<div style="left:296.00px;width:200px;text-align:right;top:544.00px;height:12.00px;line-height:12.00px;font-size:6.8px;white-space:nowrap;color:#333;">-403,6</div>
<div style="left:335.70px;width:200px;text-align:right;top:544.00px;height:12.00px;line-height:12.00px;font-size:6.8px;white-space:nowrap;color:#333;">186,3</div>
<div style="left:371.80px;width:200px;text-align:right;top:544.00px;height:12.00px;line-height:12.00px;font-size:6.8px;white-space:nowrap;color:#333;">13,5</div>
<div style="left:404.90px;width:200px;text-align:right;top:544.00px;height:12.00px;line-height:12.00px;font-size:6.8px;white-space:nowrap;color:#333;">25</div>
<div style="left:434.50px;width:200px;text-align:right;top:544.00px;height:12.00px;line-height:12.00px;font-size:6.8px;white-space:nowrap;color:#333;">3</div>
<div style="left:464.20px;width:200px;text-align:right;top:544.00px;height:12.00px;line-height:12.00px;font-size:6.8px;white-space:nowrap;color:#333;">46</div>
<div style="left:329.00px;top:555.00px;height:12.00px;line-height:12.00px;font-size:6.8px;white-space:nowrap;color:#333;">Tendons</div>
<div style="left:296.00px;width:200px;text-align:right;top:555.00px;height:12.00px;line-height:12.00px;font-size:6.8px;white-space:nowrap;color:#333;">3974,1</div>
<div style="left:335.70px;width:200px;text-align:right;top:555.00px;height:12.00px;line-height:12.00px;font-size:6.8px;white-space:nowrap;color:#333;">3548,6</div>
<div style="left:371.80px;width:200px;text-align:right;top:555.00px;height:12.00px;line-height:12.00px;font-size:6.8px;white-space:nowrap;color:#333;">-79,5</div>
<div style="left:404.90px;width:200px;text-align:right;top:555.00px;height:12.00px;line-height:12.00px;font-size:6.8px;white-space:nowrap;color:#333;">27</div>
<div style="left:434.50px;width:200px;text-align:right;top:555.00px;height:12.00px;line-height:12.00px;font-size:6.8px;white-space:nowrap;color:#333;">2</div>
<div style="left:464.20px;width:200px;text-align:right;top:555.00px;height:12.00px;line-height:12.00px;font-size:6.8px;white-space:nowrap;color:#333;">-89</div>
<div style="left:329.00px;top:565.00px;height:12.00px;line-height:12.00px;font-size:6.8px;white-space:nowrap;color:#333;">Total</div>
<div style="left:296.00px;width:200px;text-align:right;top:565.00px;height:12.00px;line-height:12.00px;font-size:6.8px;white-space:nowrap;color:#333;">0,0</div>
<div style="left:335.70px;width:200px;text-align:right;top:565.00px;height:12.00px;line-height:12.00px;font-size:6.8px;white-space:nowrap;color:#333;">6000,0</div>
<div style="left:371.80px;width:200px;text-align:right;top:565.00px;height:12.00px;line-height:12.00px;font-size:6.8px;white-space:nowrap;color:#333;">0,0</div>
<div style="left:850.60px;top:110.80px;width:144.00px;height:470.60px;background:#fff;border:1px solid #dcdcdc;border-top:none;"></div>
<div style="left:851.40px;top:110.80px;width:143.20px;height:9.80px;background:#f1f1f1;"></div>
<div style="left:852.40px;top:111.00px;height:12.00px;line-height:12.00px;font-size:6.0px;white-space:nowrap;color:#555;">Info</div>
<svg style="left:0;top:0" width="1200" height="630" viewBox="0 0 1200 630"><path d="M968.3 114.6h4.4l-2.2 2.4z" fill="#cdc794"/><path d="M978.3000000000001 113.19999999999999h1.8v3.2h-1.8zM977.6 116.39999999999999h3.2M979.2 116.39999999999999v2" stroke="#cdc794" stroke-width="0.6" fill="none"/><path d="M986.8 113.39999999999999l4.4 4.4M991.2 113.39999999999999l-4.4 4.4" stroke="#cdc794" stroke-width="0.7" fill="none"/></svg>
<div style="left:855.80px;top:125.40px;width:134.30px;height:12.00px;background:linear-gradient(#ededed 0%,#e4e4e4 55%,#c6c6c6 100%);"></div>
<div style="left:858.90px;top:127.00px;height:12.00px;line-height:12.00px;font-size:6.7px;white-space:nowrap;color:#1c1c1c;font-weight:bold;">Project Data</div>
<svg style="left:0;top:0" width="1200" height="630" viewBox="0 0 1200 630"><path d="M982.3 131.0l1.8-1.9 1.8 1.9M982.3 133.4l1.8-1.9 1.8 1.9" stroke="#222" stroke-width="0.8" fill="none"/></svg>
<div style="left:855.80px;top:137.40px;width:134.30px;height:43.10px;background:#fff;border:1px solid #d3d8e2;border-top:none;"></div>
<div style="left:856.70px;top:139.00px;height:12.00px;line-height:12.00px;font-size:6.1px;white-space:nowrap;color:#383838;-webkit-text-stroke:0.12px;">Project:</div>
<div style="left:915.40px;top:139.00px;height:12.00px;line-height:12.00px;font-size:6.1px;white-space:nowrap;color:#383838;-webkit-text-stroke:0.12px;">-- nezadáno --</div>
<div style="left:856.70px;top:147.00px;height:12.00px;line-height:12.00px;font-size:6.1px;white-space:nowrap;color:#383838;-webkit-text-stroke:0.12px;">-- nezadáno --</div>
<div style="left:856.70px;top:155.00px;height:12.00px;line-height:12.00px;font-size:6.1px;white-space:nowrap;color:#383838;-webkit-text-stroke:0.12px;">Code:</div>
<div style="left:915.40px;top:155.00px;height:12.00px;line-height:12.00px;font-size:6.1px;white-space:nowrap;color:#383838;-webkit-text-stroke:0.12px;">EN 1992-1-1</div>
<div style="left:856.70px;top:163.00px;height:12.00px;line-height:12.00px;font-size:6.1px;white-space:nowrap;color:#383838;-webkit-text-stroke:0.12px;">National Annex:</div>
<div style="left:915.40px;top:163.00px;height:12.00px;line-height:12.00px;font-size:6.1px;white-space:nowrap;color:#383838;-webkit-text-stroke:0.12px;">EN</div>
<div style="left:856.70px;top:171.00px;height:12.00px;line-height:12.00px;font-size:6.1px;white-space:nowrap;color:#383838;-webkit-text-stroke:0.12px;">Design Working Life:</div>
<div style="left:915.40px;top:171.00px;height:12.00px;line-height:12.00px;font-size:6.1px;white-space:nowrap;color:#383838;-webkit-text-stroke:0.12px;">50 years</div>
<div style="left:855.80px;top:185.70px;width:134.30px;height:11.70px;background:linear-gradient(#ededed 0%,#e4e4e4 55%,#c6c6c6 100%);"></div>
<div style="left:858.90px;top:187.00px;height:12.00px;line-height:12.00px;font-size:6.7px;white-space:nowrap;color:#1c1c1c;font-weight:bold;">Current section and extreme</div>
<svg style="left:0;top:0" width="1200" height="630" viewBox="0 0 1200 630"><path d="M982.3 191.14999999999998l1.8-1.9 1.8 1.9M982.3 193.54999999999998l1.8-1.9 1.8 1.9" stroke="#222" stroke-width="0.8" fill="none"/></svg>
<div style="left:855.80px;top:197.40px;width:134.30px;height:129.90px;background:#fff;border:1px solid #d3d8e2;border-top:none;"></div>
<div style="left:856.70px;top:199.00px;height:12.00px;line-height:12.00px;font-size:6.1px;white-space:nowrap;color:#383838;-webkit-text-stroke:0.12px;">Section:</div>
<div style="left:904.10px;top:199.00px;height:12.00px;line-height:12.00px;font-size:6.1px;white-space:nowrap;color:#383838;-webkit-text-stroke:0.12px;">S 1</div>
<div style="left:856.70px;top:207.00px;height:12.00px;line-height:12.00px;font-size:6.1px;white-space:nowrap;color:#383838;-webkit-text-stroke:0.12px;">Extreme:</div>
<div style="left:904.10px;top:207.00px;height:12.00px;line-height:12.00px;font-size:6.1px;white-space:nowrap;color:#383838;-webkit-text-stroke:0.12px;">S 1 - E 1</div>
<div style="left:856.70px;top:215.00px;height:12.00px;line-height:12.00px;font-size:6.1px;white-space:nowrap;color:#383838;-webkit-text-stroke:0.12px;">Design Member:</div>
<div style="left:904.10px;top:215.00px;height:12.00px;line-height:12.00px;font-size:6.1px;white-space:nowrap;color:#383838;-webkit-text-stroke:0.12px;">M 1</div>
<div style="left:856.70px;top:223.00px;height:12.00px;line-height:12.00px;font-size:6.1px;white-space:nowrap;color:#383838;-webkit-text-stroke:0.12px;">Member Type:</div>
<div style="left:904.10px;top:223.00px;height:12.00px;line-height:12.00px;font-size:6.1px;white-space:nowrap;color:#383838;-webkit-text-stroke:0.12px;">Beam</div>
<div style="left:856.70px;top:231.00px;height:12.00px;line-height:12.00px;font-size:6.1px;white-space:nowrap;color:#383838;-webkit-text-stroke:0.12px;">Exposure Class:</div>
<div style="left:904.10px;top:231.00px;height:12.00px;line-height:12.00px;font-size:6.1px;white-space:nowrap;color:#383838;-webkit-text-stroke:0.12px;">XC3, XD1</div>
<svg style="left:0;top:0" width="1200" height="630" viewBox="0 0 1200 630" font-family="Liberation Sans, Arial, sans-serif">
<path d="M888 256.4H951V264.2L923.9 267.2V309H929V318.9H909.1V309H914.4V267.2L888 264.2z" fill="#f4f2c6" stroke="#4c4c42" stroke-width="0.9"/>
<path d="M916.4 258v51M922 258v51" stroke="#b0b09a" stroke-width="0.5" fill="none"/>
<path d="M911.4 311h15.4" stroke="#8a8a74" stroke-width="0.4" fill="none"/>
<path d="M885 278.9H948" stroke="#333" stroke-width="0.8" stroke-dasharray="3.4 2.2" fill="none"/>
<path d="M954.4 278.9l-6.6-1.5v3z" fill="#111"/>
<path d="M919.2 259V321.6" stroke="#333" stroke-width="0.7" stroke-dasharray="2.6 1.6" fill="none"/>
<path d="M919.2 250.6l-1.7 8.2h3.4z" fill="#111"/>
<text x="919.2" y="246.4" font-size="8.6" fill="#333" text-anchor="middle" dominant-baseline="central">z</text>
<text x="958.6" y="276.6" font-size="8.6" fill="#333" text-anchor="middle" dominant-baseline="central">y</text>
<g fill="#d83020"><circle cx="890.4" cy="258.4" r="0.6"/><circle cx="890.4" cy="262" r="0.6"/><circle cx="948.6" cy="258.4" r="0.6"/><circle cx="948.6" cy="262" r="0.6"/><circle cx="917" cy="258.4" r="0.6"/><circle cx="921.4" cy="258.4" r="0.6"/><circle cx="917" cy="266.6" r="0.6"/><circle cx="921.4" cy="266.6" r="0.6"/><circle cx="917" cy="307.4" r="0.6"/><circle cx="921.4" cy="307.4" r="0.6"/><circle cx="911.6" cy="311.4" r="0.6"/><circle cx="926.6" cy="311.4" r="0.6"/></g>
<g fill="#1818d8"><circle cx="914.6" cy="315.9" r="1.2"/><circle cx="920" cy="315.9" r="1.2"/><circle cx="925.6" cy="315.9" r="1.2"/></g>
</svg>
<div style="left:855.80px;top:332.50px;width:134.30px;height:11.90px;background:linear-gradient(#ededed 0%,#e4e4e4 55%,#c6c6c6 100%);"></div>
<div style="left:858.90px;top:334.00px;height:12.00px;line-height:12.00px;font-size:6.7px;white-space:nowrap;color:#1c1c1c;font-weight:bold;">Current section check</div>
<svg style="left:0;top:0" width="1200" height="630" viewBox="0 0 1200 630"><path d="M982.3 338.05l1.8-1.9 1.8 1.9M982.3 340.45l1.8-1.9 1.8 1.9" stroke="#222" stroke-width="0.8" fill="none"/></svg>
<div style="left:855.80px;top:344.40px;width:134.30px;height:114.20px;background:#fff;border:1px solid #d3d8e2;border-top:none;"></div>
<div style="left:858.60px;top:347.00px;height:12.00px;line-height:12.00px;font-size:6.1px;white-space:nowrap;color:#383838;-webkit-text-stroke:0.12px;">Current section status:</div>
<div style="left:858.60px;top:359.00px;height:12.00px;line-height:12.00px;font-size:6.1px;white-space:nowrap;color:#383838;-webkit-text-stroke:0.12px;">Current extreme status:</div>
<div style="left:857.40px;top:371.60px;width:131.60px;height:87.00px;background:#ececec;border:1px solid #d3d8e6;"></div>
<div style="left:858.00px;top:371.80px;width:102.80px;height:8.40px;background:linear-gradient(#f4f4f4,#d6d6d6);"></div>
<div style="left:909.70px;top:371.80px;width:0.80px;height:8.40px;background:#c4c8d0;"></div>
<div style="left:939.90px;top:371.80px;width:0.80px;height:8.40px;background:#c4c8d0;"></div>
<div style="left:960.30px;top:371.80px;width:0.80px;height:8.40px;background:#c4c8d0;"></div>
<div style="left:858.00px;top:380.10px;width:130.40px;height:0.80px;background:#c9cdd6;"></div>
<div style="left:783.90px;width:200px;text-align:center;top:371.00px;height:12.00px;line-height:12.00px;font-size:6.1px;white-space:nowrap;color:#383838;-webkit-text-stroke:0.12px;">Check</div>
<div style="left:825.40px;width:200px;text-align:center;top:371.00px;height:12.00px;line-height:12.00px;font-size:6.1px;white-space:nowrap;color:#383838;-webkit-text-stroke:0.12px;">Value</div>
<div style="left:850.60px;width:200px;text-align:center;top:371.00px;height:12.00px;line-height:12.00px;font-size:6.1px;white-space:nowrap;color:#383838;-webkit-text-stroke:0.12px;">Status</div>
<div style="left:861.60px;top:382.00px;height:12.00px;line-height:12.00px;font-size:6.1px;white-space:nowrap;color:#383838;-webkit-text-stroke:0.12px;">Capacity N-M-M</div>
<div style="left:914.40px;top:382.00px;height:12.00px;line-height:12.00px;font-size:6.1px;white-space:nowrap;color:#383838;-webkit-text-stroke:0.12px;">92,8</div>
<div style="left:861.60px;top:393.00px;height:12.00px;line-height:12.00px;font-size:6.1px;white-space:nowrap;color:#383838;-webkit-text-stroke:0.12px;">Shear</div>
<div style="left:914.40px;top:393.00px;height:12.00px;line-height:12.00px;font-size:6.1px;white-space:nowrap;color:#383838;-webkit-text-stroke:0.12px;">26,7</div>
<div style="left:861.60px;top:403.00px;height:12.00px;line-height:12.00px;font-size:6.1px;white-space:nowrap;color:#383838;-webkit-text-stroke:0.12px;">Torsion</div>
<div style="left:914.40px;top:403.00px;height:12.00px;line-height:12.00px;font-size:6.1px;white-space:nowrap;color:#383838;-webkit-text-stroke:0.12px;">22,8</div>
<div style="left:861.60px;top:414.00px;height:12.00px;line-height:12.00px;font-size:6.1px;white-space:nowrap;color:#383838;-webkit-text-stroke:0.12px;">Interaction</div>
<div style="left:914.40px;top:414.00px;height:12.00px;line-height:12.00px;font-size:6.1px;white-space:nowrap;color:#383838;-webkit-text-stroke:0.12px;">100,0</div>
<div style="left:861.60px;top:425.00px;height:12.00px;line-height:12.00px;font-size:6.1px;white-space:nowrap;color:#383838;-webkit-text-stroke:0.12px;">Stress Limitation</div>
<div style="left:914.40px;top:425.00px;height:12.00px;line-height:12.00px;font-size:6.1px;white-space:nowrap;color:#383838;-webkit-text-stroke:0.12px;">98,4</div>
<div style="left:861.60px;top:436.00px;height:12.00px;line-height:12.00px;font-size:6.1px;white-space:nowrap;color:#383838;-webkit-text-stroke:0.12px;">Crack Width</div>
<div style="left:914.40px;top:436.00px;height:12.00px;line-height:12.00px;font-size:6.1px;white-space:nowrap;color:#383838;-webkit-text-stroke:0.12px;">4,4</div>
<div style="left:861.60px;top:447.00px;height:12.00px;line-height:12.00px;font-size:6.1px;white-space:nowrap;color:#383838;-webkit-text-stroke:0.12px;">Detailing</div>
<div style="left:914.40px;top:447.00px;height:12.00px;line-height:12.00px;font-size:6.1px;white-space:nowrap;color:#383838;-webkit-text-stroke:0.12px;">250,0</div>
<svg style="left:0;top:0" width="1200" height="630" viewBox="0 0 1200 630"><circle cx="927.6" cy="352.3" r="4.3" fill="#f26a2a"/><path d="M925.9 350.6l3.4 3.4M929.3000000000001 350.6l-3.4 3.4" stroke="#fff" stroke-width="1.3" fill="none"/><circle cx="929.9" cy="364.3" r="4.3" fill="#f26a2a"/><path d="M928.1999999999999 362.6l3.4 3.4M931.6 362.6l-3.4 3.4" stroke="#fff" stroke-width="1.3" fill="none"/><circle cx="950.6" cy="386.6" r="4.3" fill="#3fbe3f"/><circle cx="950.6" cy="386.6" r="4.3" fill="none" stroke="#63d063" stroke-width="0.6"/><path d="M948.5 386.8l1.5 1.7 2.8-3.3" stroke="#fff" stroke-width="1.2" fill="none"/><circle cx="950.6" cy="397.5" r="4.3" fill="#3fbe3f"/><circle cx="950.6" cy="397.5" r="4.3" fill="none" stroke="#63d063" stroke-width="0.6"/><path d="M948.5 397.7l1.5 1.7 2.8-3.3" stroke="#fff" stroke-width="1.2" fill="none"/><circle cx="950.6" cy="408.40000000000003" r="4.3" fill="#3fbe3f"/><circle cx="950.6" cy="408.40000000000003" r="4.3" fill="none" stroke="#63d063" stroke-width="0.6"/><path d="M948.5 408.6l1.5 1.7 2.8-3.3" stroke="#fff" stroke-width="1.2" fill="none"/><circle cx="950.6" cy="419.3" r="4.3" fill="#3fbe3f"/><circle cx="950.6" cy="419.3" r="4.3" fill="none" stroke="#63d063" stroke-width="0.6"/><path d="M948.5 419.5l1.5 1.7 2.8-3.3" stroke="#fff" stroke-width="1.2" fill="none"/><circle cx="950.6" cy="430.20000000000005" r="4.3" fill="#3fbe3f"/><circle cx="950.6" cy="430.20000000000005" r="4.3" fill="none" stroke="#63d063" stroke-width="0.6"/><path d="M948.5 430.40000000000003l1.5 1.7 2.8-3.3" stroke="#fff" stroke-width="1.2" fill="none"/><circle cx="950.6" cy="441.1" r="4.3" fill="#3fbe3f"/><circle cx="950.6" cy="441.1" r="4.3" fill="none" stroke="#63d063" stroke-width="0.6"/><path d="M948.5 441.3l1.5 1.7 2.8-3.3" stroke="#fff" stroke-width="1.2" fill="none"/><circle cx="950.6" cy="452.0" r="4.3" fill="#f26a2a"/><path d="M948.9 450.3l3.4 3.4M952.3000000000001 450.3l-3.4 3.4" stroke="#fff" stroke-width="1.3" fill="none"/></svg>
<div style="left:855.80px;top:464.50px;width:134.30px;height:11.10px;background:linear-gradient(#ededed 0%,#e4e4e4 55%,#c6c6c6 100%);"></div>
<div style="left:858.90px;top:465.00px;height:12.00px;line-height:12.00px;font-size:6.7px;white-space:nowrap;color:#1c1c1c;font-weight:bold;">Current extreme forces</div>
<svg style="left:0;top:0" width="1200" height="630" viewBox="0 0 1200 630"><path d="M982.3 469.65000000000003l1.8-1.9 1.8 1.9M982.3 472.05l1.8-1.9 1.8 1.9" stroke="#222" stroke-width="0.8" fill="none"/></svg>
<div style="left:855.80px;top:475.60px;width:134.30px;height:65.40px;background:#fff;border:1px solid #d3d8e2;border-top:none;"></div>
<div style="left:709.80px;width:200px;text-align:right;top:480.00px;height:12.00px;line-height:12.00px;font-size:6.1px;white-space:nowrap;color:#383838;-webkit-text-stroke:0.12px;">ULS</div>
<div style="left:734.70px;width:200px;text-align:right;top:480.00px;height:12.00px;line-height:12.00px;font-size:6.1px;white-space:nowrap;color:#383838;-webkit-text-stroke:0.12px;">Char</div>
<div style="left:759.60px;width:200px;text-align:right;top:480.00px;height:12.00px;line-height:12.00px;font-size:6.1px;white-space:nowrap;color:#383838;-webkit-text-stroke:0.12px;">Freq</div>
<div style="left:784.50px;width:200px;text-align:right;top:480.00px;height:12.00px;line-height:12.00px;font-size:6.1px;white-space:nowrap;color:#383838;-webkit-text-stroke:0.12px;">Quasi</div>
<div style="left:859.30px;top:489.00px;height:12.00px;line-height:12.00px;font-size:6.1px;white-space:nowrap;color:#383838;-webkit-text-stroke:0.12px;">N [kN]</div>
<div style="left:709.80px;width:200px;text-align:right;top:489.00px;height:12.00px;line-height:12.00px;font-size:6.1px;white-space:nowrap;color:#383838;-webkit-text-stroke:0.12px;">-3048,7</div>
<div style="left:734.70px;width:200px;text-align:right;top:489.00px;height:12.00px;line-height:12.00px;font-size:6.1px;white-space:nowrap;color:#383838;-webkit-text-stroke:0.12px;">-3048,7</div>
<div style="left:759.60px;width:200px;text-align:right;top:489.00px;height:12.00px;line-height:12.00px;font-size:6.1px;white-space:nowrap;color:#383838;-webkit-text-stroke:0.12px;">-3048,7</div>
<div style="left:784.50px;width:200px;text-align:right;top:489.00px;height:12.00px;line-height:12.00px;font-size:6.1px;white-space:nowrap;color:#383838;-webkit-text-stroke:0.12px;">-3048,7</div>
<div style="left:859.30px;top:497.00px;height:12.00px;line-height:12.00px;font-size:6.1px;white-space:nowrap;color:#383838;-webkit-text-stroke:0.12px;">My [kNm]</div>
<div style="left:709.80px;width:200px;text-align:right;top:497.00px;height:12.00px;line-height:12.00px;font-size:6.1px;white-space:nowrap;color:#383838;-webkit-text-stroke:0.12px;">3277,8</div>
<div style="left:734.70px;width:200px;text-align:right;top:497.00px;height:12.00px;line-height:12.00px;font-size:6.1px;white-space:nowrap;color:#383838;-webkit-text-stroke:0.12px;">2477,8</div>
<div style="left:759.60px;width:200px;text-align:right;top:497.00px;height:12.00px;line-height:12.00px;font-size:6.1px;white-space:nowrap;color:#383838;-webkit-text-stroke:0.12px;">577,8</div>
<div style="left:784.50px;width:200px;text-align:right;top:497.00px;height:12.00px;line-height:12.00px;font-size:6.1px;white-space:nowrap;color:#383838;-webkit-text-stroke:0.12px;">-22,2</div>
<div style="left:859.30px;top:505.00px;height:12.00px;line-height:12.00px;font-size:6.1px;white-space:nowrap;color:#383838;-webkit-text-stroke:0.12px;">Mz [kNm]</div>
<div style="left:709.80px;width:200px;text-align:right;top:505.00px;height:12.00px;line-height:12.00px;font-size:6.1px;white-space:nowrap;color:#383838;-webkit-text-stroke:0.12px;">61,0</div>
<div style="left:734.70px;width:200px;text-align:right;top:505.00px;height:12.00px;line-height:12.00px;font-size:6.1px;white-space:nowrap;color:#383838;-webkit-text-stroke:0.12px;">61,0</div>
<div style="left:759.60px;width:200px;text-align:right;top:505.00px;height:12.00px;line-height:12.00px;font-size:6.1px;white-space:nowrap;color:#383838;-webkit-text-stroke:0.12px;">61,0</div>
<div style="left:784.50px;width:200px;text-align:right;top:505.00px;height:12.00px;line-height:12.00px;font-size:6.1px;white-space:nowrap;color:#383838;-webkit-text-stroke:0.12px;">61,0</div>
<div style="left:859.30px;top:513.00px;height:12.00px;line-height:12.00px;font-size:6.1px;white-space:nowrap;color:#383838;-webkit-text-stroke:0.12px;">Vy [kN]</div>
<div style="left:709.80px;width:200px;text-align:right;top:513.00px;height:12.00px;line-height:12.00px;font-size:6.1px;white-space:nowrap;color:#383838;-webkit-text-stroke:0.12px;">0,0</div>
<div style="left:734.70px;width:200px;text-align:right;top:513.00px;height:12.00px;line-height:12.00px;font-size:6.1px;white-space:nowrap;color:#383838;-webkit-text-stroke:0.12px;">0,0</div>
<div style="left:759.60px;width:200px;text-align:right;top:513.00px;height:12.00px;line-height:12.00px;font-size:6.1px;white-space:nowrap;color:#383838;-webkit-text-stroke:0.12px;">0,0</div>
<div style="left:784.50px;width:200px;text-align:right;top:513.00px;height:12.00px;line-height:12.00px;font-size:6.1px;white-space:nowrap;color:#383838;-webkit-text-stroke:0.12px;">0,0</div>
<div style="left:859.30px;top:521.00px;height:12.00px;line-height:12.00px;font-size:6.1px;white-space:nowrap;color:#383838;-webkit-text-stroke:0.12px;">Vz [kN]</div>
<div style="left:709.80px;width:200px;text-align:right;top:521.00px;height:12.00px;line-height:12.00px;font-size:6.1px;white-space:nowrap;color:#383838;-webkit-text-stroke:0.12px;">180,0</div>
<div style="left:734.70px;width:200px;text-align:right;top:521.00px;height:12.00px;line-height:12.00px;font-size:6.1px;white-space:nowrap;color:#383838;-webkit-text-stroke:0.12px;">250,0</div>
<div style="left:759.60px;width:200px;text-align:right;top:521.00px;height:12.00px;line-height:12.00px;font-size:6.1px;white-space:nowrap;color:#383838;-webkit-text-stroke:0.12px;">200,0</div>
<div style="left:784.50px;width:200px;text-align:right;top:521.00px;height:12.00px;line-height:12.00px;font-size:6.1px;white-space:nowrap;color:#383838;-webkit-text-stroke:0.12px;">200,0</div>
<div style="left:859.30px;top:529.00px;height:12.00px;line-height:12.00px;font-size:6.1px;white-space:nowrap;color:#383838;-webkit-text-stroke:0.12px;">T [kNm]</div>
<div style="left:709.80px;width:200px;text-align:right;top:529.00px;height:12.00px;line-height:12.00px;font-size:6.1px;white-space:nowrap;color:#383838;-webkit-text-stroke:0.12px;">20,0</div>
<div style="left:734.70px;width:200px;text-align:right;top:529.00px;height:12.00px;line-height:12.00px;font-size:6.1px;white-space:nowrap;color:#383838;-webkit-text-stroke:0.12px;">0,0</div>
<div style="left:759.60px;width:200px;text-align:right;top:529.00px;height:12.00px;line-height:12.00px;font-size:6.1px;white-space:nowrap;color:#383838;-webkit-text-stroke:0.12px;">0,0</div>
<div style="left:784.50px;width:200px;text-align:right;top:529.00px;height:12.00px;line-height:12.00px;font-size:6.1px;white-space:nowrap;color:#383838;-webkit-text-stroke:0.12px;">0,0</div>
<div id="f452" style="left:895.10px;top:550.00px;height:16.00px;line-height:16.00px;font-size:9.3px;white-space:nowrap;transform-origin:0 50%;transform:scaleX(0.9999);color:#ee1c2e;font-weight:bold;">Info window</div>
</div></body></html>
